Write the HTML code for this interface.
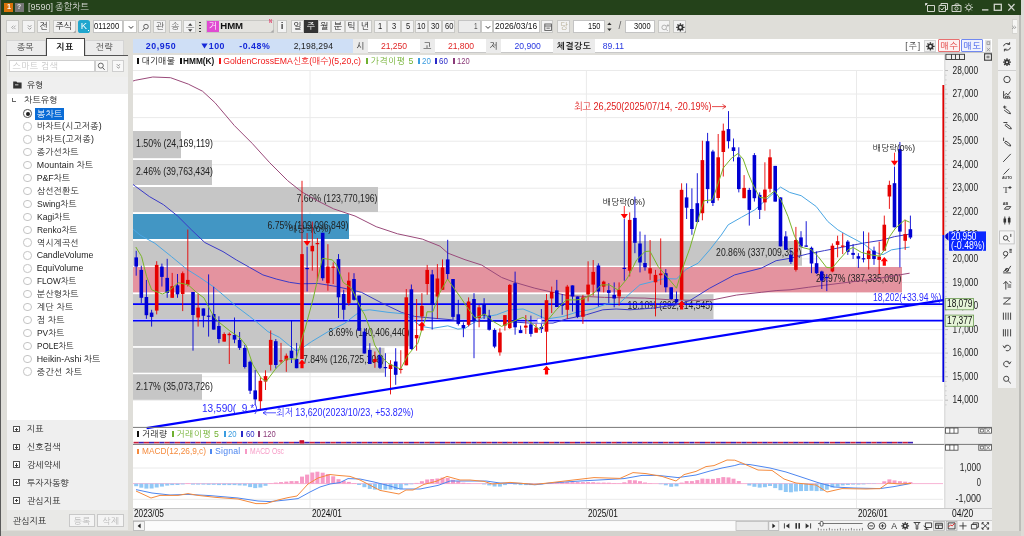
<!DOCTYPE html><html lang="ko"><head><meta charset="utf-8"><title>[9590] 종합차트</title><style>
*{box-sizing:border-box;margin:0;padding:0}
html,body{width:1024px;height:536px;overflow:hidden}
body{position:relative;background:#dfded9;font-family:"Liberation Sans","NanumGothic",sans-serif;font-size:8.6px;color:#222;line-height:1}
.a{position:absolute}
.t{position:absolute;white-space:pre;line-height:12px;height:12px}
#w{position:absolute;left:0;top:0;width:1024px;height:536px;will-change:transform}
.title{left:0;top:0;width:1021.4px;height:14.9px;background:#24421a}
.ledge{left:0;top:0;width:1.3px;height:536px;background:#5a5a5a}
.btn{position:absolute;top:19.5px;height:13.6px;background:#f3f3f3;border:0.7px solid #c9c9c6}
.inp{position:absolute;top:19.5px;height:13.6px;background:#fff;border:0.7px solid #c4c4c4}
.tab{position:absolute;top:39.5px;height:15.5px;background:#ececec;border:0.7px solid #d4d4d4;border-bottom:none}
.info{left:133px;top:39px;width:859px;height:14.4px;background:#fff;border-bottom:0.8px solid #c8c8c8}
.cell{position:absolute;top:39px;height:13.6px;background:#ebebeb}
.rd{position:absolute;left:23.4px;width:8.4px;height:8.4px;border:0.8px solid #c4c4c4;border-radius:50%;background:#fff}
.sec{position:absolute;left:6.5px;width:121px;height:17.9px;background:#efefef}
.sec i{position:absolute;left:6.6px;top:5.4px;width:6.6px;height:6.6px;border:0.8px solid #555;background:#fff}
.sec i:before{content:"";position:absolute;left:0.9px;top:2.1px;width:3.2px;height:0.8px;background:#444}
.sec i:after{content:"";position:absolute;left:2.1px;top:0.9px;width:0.8px;height:3.2px;background:#444}
.ic{position:absolute;overflow:visible}
svg text{font-family:"Liberation Sans","NanumGothic",sans-serif}
</style></head><body><div id="w">
<svg class="a" style="left:0;top:0" width="1024" height="536" viewBox="0 0 1024 536"><rect x="133" y="55" width="859" height="476" fill="#fff"/>
<rect x="945" y="53" width="47" height="478" fill="#efefef"/>
<line x1="133" x2="943" y1="70.5" y2="70.5" stroke="#eaeaea" stroke-width="1"/>
<line x1="133" x2="943" y1="94.0" y2="94.0" stroke="#eaeaea" stroke-width="1"/>
<line x1="133" x2="943" y1="117.6" y2="117.6" stroke="#eaeaea" stroke-width="1"/>
<line x1="133" x2="943" y1="141.2" y2="141.2" stroke="#eaeaea" stroke-width="1"/>
<line x1="133" x2="943" y1="164.7" y2="164.7" stroke="#eaeaea" stroke-width="1"/>
<line x1="133" x2="943" y1="188.2" y2="188.2" stroke="#eaeaea" stroke-width="1"/>
<line x1="133" x2="943" y1="211.8" y2="211.8" stroke="#eaeaea" stroke-width="1"/>
<line x1="133" x2="943" y1="235.3" y2="235.3" stroke="#eaeaea" stroke-width="1"/>
<line x1="133" x2="943" y1="258.9" y2="258.9" stroke="#eaeaea" stroke-width="1"/>
<line x1="133" x2="943" y1="282.5" y2="282.5" stroke="#eaeaea" stroke-width="1"/>
<line x1="133" x2="943" y1="306.0" y2="306.0" stroke="#eaeaea" stroke-width="1"/>
<line x1="133" x2="943" y1="329.6" y2="329.6" stroke="#eaeaea" stroke-width="1"/>
<line x1="133" x2="943" y1="353.1" y2="353.1" stroke="#eaeaea" stroke-width="1"/>
<line x1="133" x2="943" y1="376.7" y2="376.7" stroke="#eaeaea" stroke-width="1"/>
<line x1="133" x2="943" y1="400.2" y2="400.2" stroke="#eaeaea" stroke-width="1"/>
<line x1="310" x2="310" y1="70" y2="508" stroke="#eaeaea" stroke-width="1"/>
<line x1="586.4" x2="586.4" y1="70" y2="508" stroke="#eaeaea" stroke-width="1"/>
<line x1="856.5" x2="856.5" y1="70" y2="508" stroke="#eaeaea" stroke-width="1"/>
<line x1="133" x2="943" y1="468" y2="468" stroke="#eaeaea" stroke-width="1"/>
<line x1="133" x2="943" y1="499.3" y2="499.3" stroke="#eaeaea" stroke-width="1"/>
<rect x="133" y="131" width="48.0" height="27.2" fill="#c6c6c6"/>
<rect x="133" y="160" width="79.0" height="25.0" fill="#c6c6c6"/>
<rect x="133" y="187" width="245.0" height="25.0" fill="#c6c6c6"/>
<rect x="133" y="214" width="216.0" height="25.0" fill="#4296c4"/>
<rect x="133" y="241" width="669.0" height="24.7" fill="#c6c6c6"/>
<rect x="133" y="267" width="769.0" height="25.4" fill="#e4939f"/>
<rect x="133" y="294.2" width="580.5" height="24.8" fill="#c6c6c6"/>
<rect x="133" y="320.5" width="277.0" height="25.6" fill="#c6c6c6"/>
<rect x="133" y="347.8" width="251.5" height="24.9" fill="#c6c6c6"/>
<rect x="133" y="374.2" width="69.0" height="25.6" fill="#c6c6c6"/>
<text x="136.0" y="147.1" font-size="10.4" fill="#222" text-anchor="start" textLength="76.9" lengthAdjust="spacingAndGlyphs" >1.50% (24,169,119)</text>
<text x="136.0" y="175.0" font-size="10.4" fill="#222" text-anchor="start" textLength="76.9" lengthAdjust="spacingAndGlyphs" >2.46% (39,763,434)</text>
<text x="377.5" y="202.0" font-size="10.4" fill="#222" text-anchor="end" textLength="81.1" lengthAdjust="spacingAndGlyphs" >7.66% (123,770,196)</text>
<text x="348.5" y="229.0" font-size="10.4" fill="#222" text-anchor="end" textLength="81.1" lengthAdjust="spacingAndGlyphs" >6.75% (109,096,849)</text>
<text x="801.5" y="255.8" font-size="10.4" fill="#222" text-anchor="end" textLength="85.4" lengthAdjust="spacingAndGlyphs" >20.86% (337,009,352)</text>
<text x="901.5" y="282.2" font-size="10.4" fill="#222" text-anchor="end" textLength="85.4" lengthAdjust="spacingAndGlyphs" >23.97% (387,335,090)</text>
<text x="713.0" y="309.1" font-size="10.4" fill="#222" text-anchor="end" textLength="85.4" lengthAdjust="spacingAndGlyphs" >18.10% (292,414,545)</text>
<text x="409.5" y="335.8" font-size="10.4" fill="#222" text-anchor="end" textLength="81.1" lengthAdjust="spacingAndGlyphs" >8.69% (140,406,440)</text>
<text x="384.0" y="362.8" font-size="10.4" fill="#222" text-anchor="end" textLength="81.1" lengthAdjust="spacingAndGlyphs" >7.84% (126,725,106)</text>
<text x="136.0" y="389.5" font-size="10.4" fill="#222" text-anchor="start" textLength="76.9" lengthAdjust="spacingAndGlyphs" >2.17% (35,073,726)</text>
<line x1="133" x2="943" y1="304.2" y2="304.2" stroke="#0000ff" stroke-width="1.8"/>
<line x1="133" x2="943" y1="320.7" y2="320.7" stroke="#0000ff" stroke-width="1.8"/>
<polyline points="133.0,81.0 135.8,80.2 152.8,77.0 170.5,77.7 188.3,84.1 202.5,91.2 214.9,102.6 234.4,125.6 252.1,143.3 269.8,162.8 287.6,180.6 301.8,191.9 315.9,200.0 333.7,208.9 355.0,216.0 376.2,226.7 397.5,233.8 422.3,239.1 440.0,246.2 447.8,253.1 465.0,259.7 481.6,265.0 501.5,277.4 514.8,282.4 534.8,288.2 553.0,292.4 568.0,295.7 586.2,296.5 604.5,297.4 630.0,297.9 644.9,298.1 669.8,299.8 693.1,300.3 713.0,299.8 736.3,295.1 761.2,292.3 776.1,290.6 790.0,289.8 808.2,287.3 841.4,283.1 874.7,279.0 909.6,273.2" fill="none" stroke="#9a4a7a" stroke-width="1"/>
<polyline points="133.0,184.5 135.8,186.6 149.3,196.5 163.5,204.7 177.6,216.0 191.8,230.2 204.8,242.5 223.0,251.6 236.3,259.9 249.6,267.4 262.9,274.9 276.2,279.0 289.5,282.3 300.0,283.8 318.3,283.5 336.5,286.5 361.4,292.3 381.4,302.8 401.3,312.3 414.6,316.4 431.2,318.0 451.0,319.7 460.0,321.5 476.6,321.4 503.2,321.4 529.8,323.1 553.0,323.1 566.3,319.0 586.2,314.8 602.9,309.8 616.1,309.0 630.0,309.8 653.2,308.1 676.5,304.8 689.8,300.6 709.7,288.2 734.6,274.9 761.2,268.2 776.1,260.7 790.0,258.3 807.9,253.9 824.5,250.6 841.4,247.4 864.7,242.9 881.3,240.3 894.6,236.6 909.6,234.1" fill="none" stroke="#3a3ac8" stroke-width="1"/>
<polyline points="133.0,229.0 140.0,235.0 154.9,243.3 171.5,256.6 186.5,269.0 199.8,277.4 213.1,286.5 223.0,294.8 236.3,306.4 249.6,316.4 256.2,321.6 267.9,331.6 279.5,337.4 289.5,345.7 296.1,350.7 300.0,349.5 311.6,341.6 328.2,331.6 344.8,323.3 353.1,316.7 361.4,310.6 369.7,309.8 388.0,312.3 404.6,313.9 414.6,321.4 421.2,326.4 432.9,328.3 447.8,325.8 457.8,329.1 465.0,328.5 470.0,324.8 483.3,317.3 496.5,314.8 509.8,309.8 523.1,309.0 533.1,313.1 546.4,319.0 563.0,316.5 576.3,312.3 592.9,309.0 606.2,304.0 619.5,303.2 630.0,293.5 639.9,284.8 653.2,281.5 664.9,278.5 676.5,279.0 686.4,269.1 698.1,263.2 709.7,249.9 721.3,235.0 728.2,224.8 741.4,217.3 754.7,209.9 768.0,198.2 780.5,187.1 789.6,192.4 801.2,195.7 816.2,206.5 827.8,221.5 837.8,229.8 845.0,234.0 853.1,238.3 864.7,244.6 874.7,252.4 883.0,254.6 891.3,249.9 901.2,248.3 909.6,247.1" fill="none" stroke="#4aa6e4" stroke-width="1"/>
<line x1="136.2" x2="136.2" y1="250.8" y2="275.7" stroke="#0000d2" stroke-width="0.9"/>
<rect x="134.4" y="257.4" width="3.6" height="9.2" fill="#0000d2"/>
<line x1="141.3" x2="141.3" y1="265.7" y2="303.1" stroke="#0000d2" stroke-width="0.9"/>
<rect x="139.5" y="269.9" width="3.6" height="27.9" fill="#0000d2"/>
<line x1="146.4" x2="146.4" y1="279.9" y2="318.9" stroke="#0000d2" stroke-width="0.9"/>
<rect x="144.6" y="297.0" width="3.6" height="18.2" fill="#0000d2"/>
<line x1="151.6" x2="151.6" y1="309.8" y2="326.6" stroke="#0000d2" stroke-width="0.9"/>
<rect x="149.8" y="312.6" width="3.6" height="4.3" fill="#0000d2"/>
<line x1="156.7" x2="156.7" y1="261.2" y2="314.4" stroke="#e60000" stroke-width="0.9"/>
<rect x="154.9" y="264.9" width="3.6" height="45.7" fill="#e60000"/>
<line x1="161.9" x2="161.9" y1="263.6" y2="286.5" stroke="#0000d2" stroke-width="0.9"/>
<rect x="160.1" y="266.6" width="3.6" height="10.3" fill="#0000d2"/>
<line x1="167.2" x2="167.2" y1="258.8" y2="297.8" stroke="#0000d2" stroke-width="0.9"/>
<rect x="165.4" y="277.9" width="3.6" height="15.2" fill="#0000d2"/>
<line x1="172.2" x2="172.2" y1="272.9" y2="297.8" stroke="#e60000" stroke-width="0.9"/>
<rect x="170.4" y="286.2" width="3.6" height="11.6" fill="#e60000"/>
<line x1="177.5" x2="177.5" y1="274.0" y2="297.8" stroke="#0000d2" stroke-width="0.9"/>
<rect x="175.7" y="285.3" width="3.6" height="9.0" fill="#0000d2"/>
<line x1="182.7" x2="182.7" y1="271.5" y2="311.1" stroke="#e60000" stroke-width="0.9"/>
<rect x="180.9" y="273.2" width="3.6" height="20.8" fill="#e60000"/>
<line x1="187.8" x2="187.8" y1="229.5" y2="286.5" stroke="#e60000" stroke-width="0.9"/>
<rect x="186.0" y="279.9" width="3.6" height="4.9" fill="#e60000"/>
<line x1="193.0" x2="193.0" y1="292.0" y2="350.7" stroke="#0000d2" stroke-width="0.9"/>
<rect x="191.2" y="292.0" width="3.6" height="23.0" fill="#0000d2"/>
<line x1="198.1" x2="198.1" y1="294.0" y2="326.6" stroke="#e60000" stroke-width="0.9"/>
<rect x="196.3" y="307.6" width="3.6" height="9.9" fill="#e60000"/>
<line x1="203.4" x2="203.4" y1="308.4" y2="327.4" stroke="#0000d2" stroke-width="0.9"/>
<rect x="201.6" y="308.4" width="3.6" height="7.4" fill="#0000d2"/>
<line x1="208.6" x2="208.6" y1="274.4" y2="336.6" stroke="#0000d2" stroke-width="0.9"/>
<rect x="206.8" y="315.6" width="3.6" height="1.2" fill="#0000d2"/>
<line x1="213.7" x2="213.7" y1="286.8" y2="329.6" stroke="#0000d2" stroke-width="0.9"/>
<rect x="211.9" y="314.0" width="3.6" height="15.6" fill="#0000d2"/>
<line x1="218.9" x2="218.9" y1="316.3" y2="343.2" stroke="#0000d2" stroke-width="0.9"/>
<rect x="217.1" y="326.0" width="3.6" height="13.0" fill="#0000d2"/>
<line x1="224.2" x2="224.2" y1="332.4" y2="341.6" stroke="#e60000" stroke-width="0.9"/>
<rect x="222.4" y="334.0" width="3.6" height="7.6" fill="#e60000"/>
<line x1="229.3" x2="229.3" y1="332.4" y2="364.0" stroke="#e60000" stroke-width="0.9"/>
<rect x="227.5" y="333.8" width="3.6" height="1.4" fill="#e60000"/>
<line x1="234.5" x2="234.5" y1="317.5" y2="343.2" stroke="#0000d2" stroke-width="0.9"/>
<rect x="232.7" y="335.0" width="3.6" height="4.6" fill="#0000d2"/>
<line x1="239.6" x2="239.6" y1="332.0" y2="349.9" stroke="#0000d2" stroke-width="0.9"/>
<rect x="237.8" y="340.0" width="3.6" height="7.9" fill="#0000d2"/>
<line x1="244.8" x2="244.8" y1="344.9" y2="368.5" stroke="#0000d2" stroke-width="0.9"/>
<rect x="243.0" y="347.9" width="3.6" height="19.1" fill="#0000d2"/>
<line x1="250.1" x2="250.1" y1="360.7" y2="394.0" stroke="#0000d2" stroke-width="0.9"/>
<rect x="248.3" y="361.8" width="3.6" height="28.9" fill="#0000d2"/>
<line x1="255.2" x2="255.2" y1="370.0" y2="404.9" stroke="#0000d2" stroke-width="0.9"/>
<rect x="253.4" y="390.4" width="3.6" height="9.0" fill="#0000d2"/>
<line x1="260.4" x2="260.4" y1="377.4" y2="409.0" stroke="#e60000" stroke-width="0.9"/>
<rect x="258.6" y="380.8" width="3.6" height="20.4" fill="#e60000"/>
<line x1="265.5" x2="265.5" y1="370.3" y2="390.0" stroke="#e60000" stroke-width="0.9"/>
<rect x="263.7" y="376.1" width="3.6" height="5.5" fill="#e60000"/>
<line x1="270.7" x2="270.7" y1="330.4" y2="370.6" stroke="#e60000" stroke-width="0.9"/>
<rect x="268.9" y="339.9" width="3.6" height="24.9" fill="#e60000"/>
<line x1="275.8" x2="275.8" y1="339.0" y2="368.5" stroke="#0000d2" stroke-width="0.9"/>
<rect x="274.0" y="341.2" width="3.6" height="23.8" fill="#0000d2"/>
<line x1="281.0" x2="281.0" y1="342.9" y2="363.5" stroke="#e60000" stroke-width="0.9"/>
<rect x="279.2" y="360.3" width="3.6" height="1.2" fill="#e60000"/>
<line x1="286.3" x2="286.3" y1="353.5" y2="371.8" stroke="#e60000" stroke-width="0.9"/>
<rect x="284.5" y="355.7" width="3.6" height="4.6" fill="#e60000"/>
<line x1="291.5" x2="291.5" y1="320.5" y2="363.0" stroke="#0000d2" stroke-width="0.9"/>
<rect x="289.7" y="350.7" width="3.6" height="7.5" fill="#0000d2"/>
<line x1="296.6" x2="296.6" y1="342.9" y2="368.2" stroke="#0000d2" stroke-width="0.9"/>
<rect x="294.8" y="359.0" width="3.6" height="9.2" fill="#0000d2"/>
<line x1="302.0" x2="302.0" y1="180.8" y2="359.0" stroke="#e60000" stroke-width="0.9"/>
<rect x="300.2" y="254.1" width="3.6" height="104.9" fill="#e60000"/>
<line x1="307.1" x2="307.1" y1="246.6" y2="291.5" stroke="#0000d2" stroke-width="0.9"/>
<rect x="305.3" y="268.0" width="3.6" height="1.2" fill="#0000d2"/>
<line x1="312.3" x2="312.3" y1="221.5" y2="270.7" stroke="#e60000" stroke-width="0.9"/>
<rect x="310.5" y="245.8" width="3.6" height="5.5" fill="#e60000"/>
<line x1="317.4" x2="317.4" y1="238.0" y2="280.7" stroke="#e60000" stroke-width="0.9"/>
<rect x="315.6" y="243.0" width="3.6" height="1.2" fill="#e60000"/>
<line x1="322.7" x2="322.7" y1="232.8" y2="280.7" stroke="#0000d2" stroke-width="0.9"/>
<rect x="320.9" y="232.8" width="3.6" height="45.4" fill="#0000d2"/>
<line x1="327.9" x2="327.9" y1="244.2" y2="290.7" stroke="#e60000" stroke-width="0.9"/>
<rect x="326.1" y="266.6" width="3.6" height="16.6" fill="#e60000"/>
<line x1="333.2" x2="333.2" y1="262.4" y2="284.0" stroke="#e60000" stroke-width="0.9"/>
<rect x="331.4" y="266.6" width="3.6" height="1.2" fill="#e60000"/>
<line x1="338.5" x2="338.5" y1="254.1" y2="318.0" stroke="#0000d2" stroke-width="0.9"/>
<rect x="336.7" y="259.1" width="3.6" height="38.2" fill="#0000d2"/>
<line x1="343.7" x2="343.7" y1="289.8" y2="319.7" stroke="#0000d2" stroke-width="0.9"/>
<rect x="341.9" y="294.0" width="3.6" height="15.8" fill="#0000d2"/>
<line x1="348.8" x2="348.8" y1="272.4" y2="305.6" stroke="#e60000" stroke-width="0.9"/>
<rect x="347.0" y="280.7" width="3.6" height="22.4" fill="#e60000"/>
<line x1="354.0" x2="354.0" y1="273.2" y2="300.6" stroke="#0000d2" stroke-width="0.9"/>
<rect x="352.2" y="279.0" width="3.6" height="20.8" fill="#0000d2"/>
<line x1="359.1" x2="359.1" y1="295.6" y2="330.8" stroke="#0000d2" stroke-width="0.9"/>
<rect x="357.3" y="295.6" width="3.6" height="35.2" fill="#0000d2"/>
<line x1="364.4" x2="364.4" y1="328.3" y2="353.5" stroke="#0000d2" stroke-width="0.9"/>
<rect x="362.6" y="331.6" width="3.6" height="21.9" fill="#0000d2"/>
<line x1="369.8" x2="369.8" y1="343.2" y2="364.0" stroke="#0000d2" stroke-width="0.9"/>
<rect x="368.0" y="349.9" width="3.6" height="14.1" fill="#0000d2"/>
<line x1="374.9" x2="374.9" y1="351.5" y2="367.8" stroke="#e60000" stroke-width="0.9"/>
<rect x="373.1" y="359.0" width="3.6" height="3.0" fill="#e60000"/>
<line x1="380.0" x2="380.0" y1="347.4" y2="369.0" stroke="#0000d2" stroke-width="0.9"/>
<rect x="378.2" y="354.9" width="3.6" height="12.9" fill="#0000d2"/>
<line x1="385.4" x2="385.4" y1="353.2" y2="376.8" stroke="#0000d2" stroke-width="0.9"/>
<rect x="383.6" y="367.0" width="3.6" height="1.2" fill="#0000d2"/>
<line x1="390.5" x2="390.5" y1="360.2" y2="394.4" stroke="#e60000" stroke-width="0.9"/>
<rect x="388.7" y="364.5" width="3.6" height="4.5" fill="#e60000"/>
<line x1="395.7" x2="395.7" y1="348.2" y2="384.8" stroke="#0000d2" stroke-width="0.9"/>
<rect x="393.9" y="361.5" width="3.6" height="13.3" fill="#0000d2"/>
<line x1="400.8" x2="400.8" y1="350.2" y2="373.5" stroke="#e60000" stroke-width="0.9"/>
<rect x="399.0" y="368.8" width="3.6" height="1.2" fill="#e60000"/>
<line x1="406.3" x2="406.3" y1="289.0" y2="365.3" stroke="#e60000" stroke-width="0.9"/>
<rect x="404.5" y="297.3" width="3.6" height="68.0" fill="#e60000"/>
<line x1="411.4" x2="411.4" y1="284.5" y2="349.9" stroke="#0000d2" stroke-width="0.9"/>
<rect x="409.6" y="289.3" width="3.6" height="59.7" fill="#0000d2"/>
<line x1="416.6" x2="416.6" y1="299.0" y2="350.7" stroke="#e60000" stroke-width="0.9"/>
<rect x="414.8" y="335.0" width="3.6" height="3.3" fill="#e60000"/>
<line x1="421.9" x2="421.9" y1="293.2" y2="321.0" stroke="#e60000" stroke-width="0.9"/>
<rect x="420.1" y="305.9" width="3.6" height="10.5" fill="#e60000"/>
<line x1="427.2" x2="427.2" y1="264.9" y2="294.8" stroke="#e60000" stroke-width="0.9"/>
<rect x="425.4" y="269.9" width="3.6" height="14.1" fill="#e60000"/>
<line x1="432.2" x2="432.2" y1="269.9" y2="329.6" stroke="#0000d2" stroke-width="0.9"/>
<rect x="430.4" y="274.4" width="3.6" height="30.4" fill="#0000d2"/>
<line x1="437.4" x2="437.4" y1="264.1" y2="318.9" stroke="#e60000" stroke-width="0.9"/>
<rect x="435.6" y="278.5" width="3.6" height="18.0" fill="#e60000"/>
<line x1="442.5" x2="442.5" y1="259.4" y2="289.8" stroke="#e60000" stroke-width="0.9"/>
<rect x="440.7" y="267.4" width="3.6" height="22.4" fill="#e60000"/>
<line x1="447.7" x2="447.7" y1="239.8" y2="279.9" stroke="#0000d2" stroke-width="0.9"/>
<rect x="445.9" y="259.4" width="3.6" height="14.6" fill="#0000d2"/>
<line x1="453.0" x2="453.0" y1="279.0" y2="319.7" stroke="#0000d2" stroke-width="0.9"/>
<rect x="451.2" y="279.0" width="3.6" height="37.9" fill="#0000d2"/>
<line x1="458.3" x2="458.3" y1="299.8" y2="325.5" stroke="#0000d2" stroke-width="0.9"/>
<rect x="456.5" y="314.3" width="3.6" height="9.6" fill="#0000d2"/>
<line x1="463.4" x2="463.4" y1="322.3" y2="337.2" stroke="#0000d2" stroke-width="0.9"/>
<rect x="461.6" y="325.0" width="3.6" height="3.0" fill="#0000d2"/>
<line x1="468.6" x2="468.6" y1="297.4" y2="326.4" stroke="#e60000" stroke-width="0.9"/>
<rect x="466.8" y="301.5" width="3.6" height="23.3" fill="#e60000"/>
<line x1="474.0" x2="474.0" y1="293.2" y2="358.2" stroke="#0000d2" stroke-width="0.9"/>
<rect x="472.2" y="299.0" width="3.6" height="21.6" fill="#0000d2"/>
<line x1="479.1" x2="479.1" y1="304.8" y2="327.3" stroke="#e60000" stroke-width="0.9"/>
<rect x="477.3" y="307.3" width="3.6" height="10.8" fill="#e60000"/>
<line x1="484.1" x2="484.1" y1="298.2" y2="319.0" stroke="#0000d2" stroke-width="0.9"/>
<rect x="482.3" y="304.0" width="3.6" height="11.6" fill="#0000d2"/>
<line x1="489.2" x2="489.2" y1="309.8" y2="330.6" stroke="#0000d2" stroke-width="0.9"/>
<rect x="487.4" y="315.6" width="3.6" height="14.2" fill="#0000d2"/>
<line x1="494.6" x2="494.6" y1="328.3" y2="348.2" stroke="#0000d2" stroke-width="0.9"/>
<rect x="492.8" y="330.0" width="3.6" height="16.6" fill="#0000d2"/>
<line x1="499.9" x2="499.9" y1="328.3" y2="355.7" stroke="#e60000" stroke-width="0.9"/>
<rect x="498.1" y="332.5" width="3.6" height="19.9" fill="#e60000"/>
<line x1="504.9" x2="504.9" y1="315.1" y2="330.6" stroke="#e60000" stroke-width="0.9"/>
<rect x="503.1" y="315.1" width="3.6" height="10.5" fill="#e60000"/>
<line x1="509.8" x2="509.8" y1="284.1" y2="329.0" stroke="#e60000" stroke-width="0.9"/>
<rect x="508.0" y="284.9" width="3.6" height="43.2" fill="#e60000"/>
<line x1="515.1" x2="515.1" y1="271.6" y2="334.7" stroke="#0000d2" stroke-width="0.9"/>
<rect x="513.3" y="283.2" width="3.6" height="44.1" fill="#0000d2"/>
<line x1="520.6" x2="520.6" y1="325.6" y2="333.1" stroke="#0000d2" stroke-width="0.9"/>
<rect x="518.8" y="330.1" width="3.6" height="3.0" fill="#0000d2"/>
<line x1="525.8" x2="525.8" y1="315.1" y2="333.9" stroke="#e60000" stroke-width="0.9"/>
<rect x="524.0" y="325.6" width="3.6" height="2.0" fill="#e60000"/>
<line x1="530.9" x2="530.9" y1="315.6" y2="336.7" stroke="#0000d2" stroke-width="0.9"/>
<rect x="529.1" y="324.4" width="3.6" height="9.5" fill="#0000d2"/>
<line x1="536.1" x2="536.1" y1="323.9" y2="332.7" stroke="#e60000" stroke-width="0.9"/>
<rect x="534.3" y="327.6" width="3.6" height="5.1" fill="#e60000"/>
<line x1="541.4" x2="541.4" y1="309.0" y2="333.0" stroke="#0000d2" stroke-width="0.9"/>
<rect x="539.6" y="327.0" width="3.6" height="2.0" fill="#0000d2"/>
<line x1="546.5" x2="546.5" y1="294.0" y2="364.0" stroke="#e60000" stroke-width="0.9"/>
<rect x="544.7" y="300.2" width="3.6" height="31.5" fill="#e60000"/>
<line x1="551.7" x2="551.7" y1="286.6" y2="313.1" stroke="#e60000" stroke-width="0.9"/>
<rect x="549.9" y="291.9" width="3.6" height="6.6" fill="#e60000"/>
<line x1="556.8" x2="556.8" y1="279.9" y2="307.0" stroke="#0000d2" stroke-width="0.9"/>
<rect x="555.0" y="290.4" width="3.6" height="16.6" fill="#0000d2"/>
<line x1="562.2" x2="562.2" y1="294.0" y2="314.8" stroke="#0000d2" stroke-width="0.9"/>
<rect x="560.4" y="304.5" width="3.6" height="1.2" fill="#0000d2"/>
<line x1="567.3" x2="567.3" y1="284.9" y2="319.0" stroke="#e60000" stroke-width="0.9"/>
<rect x="565.5" y="286.6" width="3.6" height="23.2" fill="#e60000"/>
<line x1="572.5" x2="572.5" y1="285.4" y2="311.5" stroke="#0000d2" stroke-width="0.9"/>
<rect x="570.7" y="285.4" width="3.6" height="11.1" fill="#0000d2"/>
<line x1="577.6" x2="577.6" y1="296.5" y2="318.1" stroke="#0000d2" stroke-width="0.9"/>
<rect x="575.8" y="296.5" width="3.6" height="20.3" fill="#0000d2"/>
<line x1="582.9" x2="582.9" y1="294.9" y2="323.9" stroke="#e60000" stroke-width="0.9"/>
<rect x="581.1" y="297.4" width="3.6" height="19.4" fill="#e60000"/>
<line x1="588.1" x2="588.1" y1="261.3" y2="301.5" stroke="#e60000" stroke-width="0.9"/>
<rect x="586.3" y="284.6" width="3.6" height="9.8" fill="#e60000"/>
<line x1="593.2" x2="593.2" y1="260.0" y2="295.7" stroke="#e60000" stroke-width="0.9"/>
<rect x="591.4" y="271.9" width="3.6" height="12.7" fill="#e60000"/>
<line x1="598.4" x2="598.4" y1="263.3" y2="306.5" stroke="#0000d2" stroke-width="0.9"/>
<rect x="596.6" y="265.5" width="3.6" height="26.0" fill="#0000d2"/>
<line x1="603.7" x2="603.7" y1="280.7" y2="292.4" stroke="#e60000" stroke-width="0.9"/>
<rect x="601.9" y="281.6" width="3.6" height="5.0" fill="#e60000"/>
<line x1="608.8" x2="608.8" y1="283.2" y2="303.2" stroke="#0000d2" stroke-width="0.9"/>
<rect x="607.0" y="290.2" width="3.6" height="2.7" fill="#0000d2"/>
<line x1="614.2" x2="614.2" y1="282.4" y2="307.3" stroke="#0000d2" stroke-width="0.9"/>
<rect x="612.4" y="294.9" width="3.6" height="3.6" fill="#0000d2"/>
<line x1="619.1" x2="619.1" y1="282.4" y2="305.7" stroke="#e60000" stroke-width="0.9"/>
<rect x="617.3" y="289.9" width="3.6" height="6.6" fill="#e60000"/>
<line x1="624.3" x2="624.3" y1="219.0" y2="280.7" stroke="#0000d2" stroke-width="0.9"/>
<rect x="622.5" y="267.8" width="3.6" height="1.2" fill="#0000d2"/>
<line x1="629.7" x2="629.7" y1="212.4" y2="276.5" stroke="#e60000" stroke-width="0.9"/>
<rect x="627.9" y="219.9" width="3.6" height="50.8" fill="#e60000"/>
<line x1="634.9" x2="634.9" y1="196.6" y2="253.2" stroke="#0000d2" stroke-width="0.9"/>
<rect x="633.1" y="217.9" width="3.6" height="24.9" fill="#0000d2"/>
<line x1="640.0" x2="640.0" y1="231.5" y2="272.4" stroke="#0000d2" stroke-width="0.9"/>
<rect x="638.2" y="243.5" width="3.6" height="19.0" fill="#0000d2"/>
<line x1="645.0" x2="645.0" y1="234.8" y2="270.7" stroke="#0000d2" stroke-width="0.9"/>
<rect x="643.2" y="263.0" width="3.6" height="4.3" fill="#0000d2"/>
<line x1="650.1" x2="650.1" y1="240.0" y2="279.9" stroke="#e60000" stroke-width="0.9"/>
<rect x="648.3" y="268.2" width="3.6" height="5.3" fill="#e60000"/>
<line x1="655.5" x2="655.5" y1="269.9" y2="316.4" stroke="#e60000" stroke-width="0.9"/>
<rect x="653.7" y="274.9" width="3.6" height="7.4" fill="#e60000"/>
<line x1="660.7" x2="660.7" y1="238.4" y2="284.8" stroke="#e60000" stroke-width="0.9"/>
<rect x="658.9" y="273.5" width="3.6" height="1.7" fill="#e60000"/>
<line x1="665.8" x2="665.8" y1="269.1" y2="292.3" stroke="#0000d2" stroke-width="0.9"/>
<rect x="664.0" y="273.2" width="3.6" height="14.1" fill="#0000d2"/>
<line x1="671.2" x2="671.2" y1="287.3" y2="299.8" stroke="#0000d2" stroke-width="0.9"/>
<rect x="669.4" y="287.3" width="3.6" height="11.7" fill="#0000d2"/>
<line x1="676.5" x2="676.5" y1="291.5" y2="303.1" stroke="#0000d2" stroke-width="0.9"/>
<rect x="674.7" y="299.0" width="3.6" height="3.3" fill="#0000d2"/>
<line x1="681.6" x2="681.6" y1="183.3" y2="299.8" stroke="#e60000" stroke-width="0.9"/>
<rect x="679.8" y="189.8" width="3.6" height="110.0" fill="#e60000"/>
<line x1="686.6" x2="686.6" y1="183.3" y2="219.0" stroke="#0000d2" stroke-width="0.9"/>
<rect x="684.8" y="197.4" width="3.6" height="10.3" fill="#0000d2"/>
<line x1="691.9" x2="691.9" y1="188.3" y2="234.8" stroke="#0000d2" stroke-width="0.9"/>
<rect x="690.1" y="209.0" width="3.6" height="20.0" fill="#0000d2"/>
<line x1="697.3" x2="697.3" y1="173.2" y2="222.3" stroke="#0000d2" stroke-width="0.9"/>
<rect x="695.5" y="203.2" width="3.6" height="18.8" fill="#0000d2"/>
<line x1="702.4" x2="702.4" y1="140.7" y2="220.3" stroke="#e60000" stroke-width="0.9"/>
<rect x="700.6" y="160.1" width="3.6" height="53.1" fill="#e60000"/>
<line x1="707.6" x2="707.6" y1="132.9" y2="203.2" stroke="#0000d2" stroke-width="0.9"/>
<rect x="705.8" y="141.2" width="3.6" height="47.9" fill="#0000d2"/>
<line x1="712.9" x2="712.9" y1="149.8" y2="206.0" stroke="#0000d2" stroke-width="0.9"/>
<rect x="711.1" y="151.5" width="3.6" height="51.5" fill="#0000d2"/>
<line x1="718.2" x2="718.2" y1="134.0" y2="200.5" stroke="#e60000" stroke-width="0.9"/>
<rect x="716.4" y="157.3" width="3.6" height="40.7" fill="#e60000"/>
<line x1="723.3" x2="723.3" y1="123.6" y2="176.5" stroke="#e60000" stroke-width="0.9"/>
<rect x="721.5" y="130.7" width="3.6" height="21.3" fill="#e60000"/>
<line x1="728.5" x2="728.5" y1="111.1" y2="148.5" stroke="#0000d2" stroke-width="0.9"/>
<rect x="726.7" y="129.1" width="3.6" height="12.1" fill="#0000d2"/>
<line x1="733.5" x2="733.5" y1="138.5" y2="161.4" stroke="#0000d2" stroke-width="0.9"/>
<rect x="731.7" y="147.3" width="3.6" height="3.7" fill="#0000d2"/>
<line x1="738.8" x2="738.8" y1="147.3" y2="192.4" stroke="#0000d2" stroke-width="0.9"/>
<rect x="737.0" y="157.3" width="3.6" height="31.8" fill="#0000d2"/>
<line x1="744.1" x2="744.1" y1="175.1" y2="198.2" stroke="#e60000" stroke-width="0.9"/>
<rect x="742.3" y="187.9" width="3.6" height="10.3" fill="#e60000"/>
<line x1="749.3" x2="749.3" y1="187.9" y2="225.6" stroke="#0000d2" stroke-width="0.9"/>
<rect x="747.5" y="189.9" width="3.6" height="20.0" fill="#0000d2"/>
<line x1="754.4" x2="754.4" y1="153.1" y2="201.6" stroke="#0000d2" stroke-width="0.9"/>
<rect x="752.6" y="155.1" width="3.6" height="43.1" fill="#0000d2"/>
<line x1="759.7" x2="759.7" y1="192.4" y2="219.0" stroke="#0000d2" stroke-width="0.9"/>
<rect x="757.9" y="194.9" width="3.6" height="15.0" fill="#0000d2"/>
<line x1="764.9" x2="764.9" y1="162.3" y2="210.7" stroke="#e60000" stroke-width="0.9"/>
<rect x="763.1" y="189.6" width="3.6" height="12.8" fill="#e60000"/>
<line x1="770.0" x2="770.0" y1="149.3" y2="192.4" stroke="#e60000" stroke-width="0.9"/>
<rect x="768.2" y="157.3" width="3.6" height="31.5" fill="#e60000"/>
<line x1="775.2" x2="775.2" y1="165.9" y2="201.6" stroke="#0000d2" stroke-width="0.9"/>
<rect x="773.4" y="165.9" width="3.6" height="35.7" fill="#0000d2"/>
<line x1="780.5" x2="780.5" y1="197.4" y2="246.4" stroke="#0000d2" stroke-width="0.9"/>
<rect x="778.7" y="197.4" width="3.6" height="49.0" fill="#0000d2"/>
<line x1="785.8" x2="785.8" y1="231.2" y2="249.8" stroke="#0000d2" stroke-width="0.9"/>
<rect x="784.0" y="236.4" width="3.6" height="13.4" fill="#0000d2"/>
<line x1="790.9" x2="790.9" y1="249.9" y2="264.0" stroke="#0000d2" stroke-width="0.9"/>
<rect x="789.1" y="254.8" width="3.6" height="7.1" fill="#0000d2"/>
<line x1="795.9" x2="795.9" y1="226.9" y2="271.5" stroke="#e60000" stroke-width="0.9"/>
<rect x="794.1" y="240.0" width="3.6" height="29.9" fill="#e60000"/>
<line x1="801.0" x2="801.0" y1="231.2" y2="247.3" stroke="#0000d2" stroke-width="0.9"/>
<rect x="799.2" y="237.4" width="3.6" height="9.1" fill="#0000d2"/>
<line x1="806.2" x2="806.2" y1="221.2" y2="247.0" stroke="#0000d2" stroke-width="0.9"/>
<rect x="804.4" y="245.5" width="3.6" height="1.2" fill="#0000d2"/>
<line x1="811.5" x2="811.5" y1="246.6" y2="273.2" stroke="#0000d2" stroke-width="0.9"/>
<rect x="809.7" y="247.8" width="3.6" height="15.7" fill="#0000d2"/>
<line x1="816.6" x2="816.6" y1="251.5" y2="274.0" stroke="#0000d2" stroke-width="0.9"/>
<rect x="814.8" y="263.2" width="3.6" height="10.0" fill="#0000d2"/>
<line x1="821.8" x2="821.8" y1="270.7" y2="289.0" stroke="#0000d2" stroke-width="0.9"/>
<rect x="820.0" y="271.5" width="3.6" height="9.1" fill="#0000d2"/>
<line x1="826.8" x2="826.8" y1="274.0" y2="291.1" stroke="#0000d2" stroke-width="0.9"/>
<rect x="825.0" y="277.0" width="3.6" height="1.2" fill="#0000d2"/>
<line x1="832.4" x2="832.4" y1="243.4" y2="272.3" stroke="#e60000" stroke-width="0.9"/>
<rect x="830.6" y="245.7" width="3.6" height="25.8" fill="#e60000"/>
<line x1="837.6" x2="837.6" y1="235.7" y2="257.4" stroke="#e60000" stroke-width="0.9"/>
<rect x="835.8" y="241.2" width="3.6" height="3.7" fill="#e60000"/>
<line x1="842.7" x2="842.7" y1="233.2" y2="254.1" stroke="#e60000" stroke-width="0.9"/>
<rect x="840.9" y="245.5" width="3.6" height="1.3" fill="#e60000"/>
<line x1="847.8" x2="847.8" y1="240.0" y2="254.9" stroke="#0000d2" stroke-width="0.9"/>
<rect x="846.0" y="241.6" width="3.6" height="10.3" fill="#0000d2"/>
<line x1="853.1" x2="853.1" y1="244.1" y2="259.0" stroke="#0000d2" stroke-width="0.9"/>
<rect x="851.3" y="252.9" width="3.6" height="2.0" fill="#0000d2"/>
<line x1="858.4" x2="858.4" y1="253.2" y2="267.9" stroke="#0000d2" stroke-width="0.9"/>
<rect x="856.6" y="256.2" width="3.6" height="2.5" fill="#0000d2"/>
<line x1="863.5" x2="863.5" y1="231.3" y2="262.4" stroke="#0000d2" stroke-width="0.9"/>
<rect x="861.7" y="258.2" width="3.6" height="1.2" fill="#0000d2"/>
<line x1="868.7" x2="868.7" y1="232.5" y2="269.5" stroke="#e60000" stroke-width="0.9"/>
<rect x="866.9" y="250.7" width="3.6" height="8.3" fill="#e60000"/>
<line x1="874.0" x2="874.0" y1="246.6" y2="264.9" stroke="#0000d2" stroke-width="0.9"/>
<rect x="872.2" y="250.7" width="3.6" height="8.3" fill="#0000d2"/>
<line x1="879.2" x2="879.2" y1="241.6" y2="274.0" stroke="#e60000" stroke-width="0.9"/>
<rect x="877.4" y="256.6" width="3.6" height="3.3" fill="#e60000"/>
<line x1="884.3" x2="884.3" y1="215.6" y2="250.7" stroke="#e60000" stroke-width="0.9"/>
<rect x="882.5" y="224.7" width="3.6" height="26.0" fill="#e60000"/>
<line x1="889.4" x2="889.4" y1="180.7" y2="208.9" stroke="#e60000" stroke-width="0.9"/>
<rect x="887.6" y="184.9" width="3.6" height="11.6" fill="#e60000"/>
<line x1="894.5" x2="894.5" y1="166.6" y2="227.3" stroke="#0000d2" stroke-width="0.9"/>
<rect x="892.7" y="183.2" width="3.6" height="44.1" fill="#0000d2"/>
<line x1="899.9" x2="899.9" y1="142.0" y2="267.4" stroke="#0000d2" stroke-width="0.9"/>
<rect x="898.1" y="149.1" width="3.6" height="82.5" fill="#0000d2"/>
<line x1="905.2" x2="905.2" y1="219.7" y2="249.9" stroke="#e60000" stroke-width="0.9"/>
<rect x="903.4" y="234.1" width="3.6" height="6.7" fill="#e60000"/>
<line x1="910.4" x2="910.4" y1="215.6" y2="239.1" stroke="#0000d2" stroke-width="0.9"/>
<rect x="908.6" y="229.2" width="3.6" height="8.3" fill="#0000d2"/>
<polyline points="135.8,247.0 141.6,256.6 146.6,276.5 151.6,289.8 162.4,294.0 168.2,291.5 178.2,282.7 188.1,284.8 196.4,292.3 203.9,297.8 209.7,309.0 214.7,318.1 219.7,322.7 229.7,330.8 239.6,337.4 246.3,345.7 252.9,364.8 261.2,378.1 266.2,381.4 276.2,368.1 286.1,359.0 296.1,359.0 298.3,351.5 302.5,336.6 305.0,329.0 313.3,298.1 322.4,258.3 332.4,259.9 336.5,264.9 343.2,282.4 351.5,288.2 359.8,306.4 364.8,315.0 369.8,328.3 374.7,344.9 381.4,356.5 388.0,363.2 394.7,366.5 400.5,369.0 408.0,354.9 417.9,343.2 422.1,328.3 426.2,316.7 427.0,311.8 432.9,311.8 439.5,293.2 447.5,279.0 454.5,289.0 461.1,298.1 466.6,306.5 475.0,318.1 484.9,314.0 493.2,321.4 501.5,326.4 513.2,321.4 523.1,317.3 531.4,323.1 539.7,329.8 548.0,319.8 556.3,309.8 566.3,299.9 576.3,299.9 582.9,299.0 592.9,294.0 601.2,284.9 609.5,284.9 617.8,289.9 626.1,279.9 628.3,276.5 636.6,259.9 644.9,251.6 649.9,251.1 658.2,266.6 668.2,278.2 676.5,288.2 681.5,271.5 689.8,248.3 693.3,236.4 699.9,213.2 704.1,200.7 712.4,199.9 716.5,188.3 723.2,168.1 731.5,158.1 738.1,153.5 743.1,159.0 748.1,173.1 753.1,185.0 759.7,197.4 765.5,198.2 774.7,190.8 781.3,200.7 788.0,216.5 794.6,236.4 801.2,247.2 811.2,249.7 818.2,256.6 826.5,267.4 832.3,267.9 839.8,259.0 848.1,249.9 853.1,247.4 861.4,252.4 871.3,254.9 879.7,256.2 884.6,249.9 889.6,236.6 895.6,228.0 904.7,220.1 909.7,222.2" fill="none" stroke="#78b428" stroke-width="1"/>
<path d="M302,359.5 l3.6,4.2 h-2 v4.6 h-3.2 v-4.6 h-2 z" fill="#ff0000"/>
<path d="M421.9,321.6 l3.6,4.2 h-2 v4.6 h-3.2 v-4.6 h-2 z" fill="#ff0000"/>
<path d="M546.5,365.7 l3.6,4.2 h-2 v4.6 h-3.2 v-4.6 h-2 z" fill="#ff0000"/>
<path d="M681.6,300.6 l3.6,4.2 h-2 v4.6 h-3.2 v-4.6 h-2 z" fill="#ff0000"/>
<path d="M884.3,257 l3.6,4.2 h-2 v4.6 h-3.2 v-4.6 h-2 z" fill="#ff0000"/>
<path d="M307.1,246 l-3.6,-5 h7.2 z" fill="#ff0000"/><line x1="307.1" x2="307.1" y1="233" y2="242" stroke="#ff0000" stroke-width="0.8"/>
<path d="M624.3,219 l-3.6,-5 h7.2 z" fill="#ff0000"/><line x1="624.3" x2="624.3" y1="206" y2="215" stroke="#ff0000" stroke-width="0.8"/>
<path d="M894.5,165.7 l-3.6,-5 h7.2 z" fill="#ff0000"/><line x1="894.5" x2="894.5" y1="152.7" y2="161.7" stroke="#ff0000" stroke-width="0.8"/>
<line x1="146.6" y1="428.1" x2="943" y2="300.1" stroke="#0000ff" stroke-width="2.2"/>
<rect x="537.2" y="318.6" width="4.6" height="4.6" fill="#fff" stroke="#8888ff" stroke-width="0.6"/>
<rect x="942.4" y="85" width="2.2" height="150" fill="#e00000"/>
<rect x="942.4" y="235" width="2.2" height="147" fill="#0000e0"/>
<path d="M712,106.6 h14 m-3.5,-2.2 l3.5,2.2 l-3.5,2.2" stroke="#e02020" stroke-width="0.8" fill="none"/>
<path d="M276,412.8 h-13 m3.5,-2.2 l-3.5,2.2 l3.5,2.2" stroke="#2a2aff" stroke-width="0.8" fill="none"/>
<line x1="945" x2="948" y1="70.5" y2="70.5" stroke="#bbb" stroke-width="1"/>
<line x1="945" x2="948" y1="94.0" y2="94.0" stroke="#bbb" stroke-width="1"/>
<line x1="945" x2="948" y1="117.6" y2="117.6" stroke="#bbb" stroke-width="1"/>
<line x1="945" x2="948" y1="141.2" y2="141.2" stroke="#bbb" stroke-width="1"/>
<line x1="945" x2="948" y1="164.7" y2="164.7" stroke="#bbb" stroke-width="1"/>
<line x1="945" x2="948" y1="188.2" y2="188.2" stroke="#bbb" stroke-width="1"/>
<line x1="945" x2="948" y1="211.8" y2="211.8" stroke="#bbb" stroke-width="1"/>
<line x1="945" x2="948" y1="235.3" y2="235.3" stroke="#bbb" stroke-width="1"/>
<line x1="945" x2="948" y1="258.9" y2="258.9" stroke="#bbb" stroke-width="1"/>
<line x1="945" x2="948" y1="282.5" y2="282.5" stroke="#bbb" stroke-width="1"/>
<line x1="945" x2="948" y1="306.0" y2="306.0" stroke="#bbb" stroke-width="1"/>
<line x1="945" x2="948" y1="329.6" y2="329.6" stroke="#bbb" stroke-width="1"/>
<line x1="945" x2="948" y1="353.1" y2="353.1" stroke="#bbb" stroke-width="1"/>
<line x1="945" x2="948" y1="376.7" y2="376.7" stroke="#bbb" stroke-width="1"/>
<line x1="945" x2="948" y1="400.2" y2="400.2" stroke="#bbb" stroke-width="1"/>
<line x1="945" x2="946.6" y1="75.2" y2="75.2" stroke="#c4c4c4" stroke-width="0.8"/>
<line x1="945" x2="946.6" y1="79.9" y2="79.9" stroke="#c4c4c4" stroke-width="0.8"/>
<line x1="945" x2="946.6" y1="84.6" y2="84.6" stroke="#c4c4c4" stroke-width="0.8"/>
<line x1="945" x2="946.6" y1="89.3" y2="89.3" stroke="#c4c4c4" stroke-width="0.8"/>
<line x1="945" x2="946.6" y1="98.8" y2="98.8" stroke="#c4c4c4" stroke-width="0.8"/>
<line x1="945" x2="946.6" y1="103.5" y2="103.5" stroke="#c4c4c4" stroke-width="0.8"/>
<line x1="945" x2="946.6" y1="108.2" y2="108.2" stroke="#c4c4c4" stroke-width="0.8"/>
<line x1="945" x2="946.6" y1="112.9" y2="112.9" stroke="#c4c4c4" stroke-width="0.8"/>
<line x1="945" x2="946.6" y1="122.3" y2="122.3" stroke="#c4c4c4" stroke-width="0.8"/>
<line x1="945" x2="946.6" y1="127.0" y2="127.0" stroke="#c4c4c4" stroke-width="0.8"/>
<line x1="945" x2="946.6" y1="131.7" y2="131.7" stroke="#c4c4c4" stroke-width="0.8"/>
<line x1="945" x2="946.6" y1="136.4" y2="136.4" stroke="#c4c4c4" stroke-width="0.8"/>
<line x1="945" x2="946.6" y1="145.9" y2="145.9" stroke="#c4c4c4" stroke-width="0.8"/>
<line x1="945" x2="946.6" y1="150.6" y2="150.6" stroke="#c4c4c4" stroke-width="0.8"/>
<line x1="945" x2="946.6" y1="155.3" y2="155.3" stroke="#c4c4c4" stroke-width="0.8"/>
<line x1="945" x2="946.6" y1="160.0" y2="160.0" stroke="#c4c4c4" stroke-width="0.8"/>
<line x1="945" x2="946.6" y1="169.4" y2="169.4" stroke="#c4c4c4" stroke-width="0.8"/>
<line x1="945" x2="946.6" y1="174.1" y2="174.1" stroke="#c4c4c4" stroke-width="0.8"/>
<line x1="945" x2="946.6" y1="178.8" y2="178.8" stroke="#c4c4c4" stroke-width="0.8"/>
<line x1="945" x2="946.6" y1="183.5" y2="183.5" stroke="#c4c4c4" stroke-width="0.8"/>
<line x1="945" x2="946.6" y1="193.0" y2="193.0" stroke="#c4c4c4" stroke-width="0.8"/>
<line x1="945" x2="946.6" y1="197.7" y2="197.7" stroke="#c4c4c4" stroke-width="0.8"/>
<line x1="945" x2="946.6" y1="202.4" y2="202.4" stroke="#c4c4c4" stroke-width="0.8"/>
<line x1="945" x2="946.6" y1="207.1" y2="207.1" stroke="#c4c4c4" stroke-width="0.8"/>
<line x1="945" x2="946.6" y1="216.5" y2="216.5" stroke="#c4c4c4" stroke-width="0.8"/>
<line x1="945" x2="946.6" y1="221.2" y2="221.2" stroke="#c4c4c4" stroke-width="0.8"/>
<line x1="945" x2="946.6" y1="225.9" y2="225.9" stroke="#c4c4c4" stroke-width="0.8"/>
<line x1="945" x2="946.6" y1="230.6" y2="230.6" stroke="#c4c4c4" stroke-width="0.8"/>
<line x1="945" x2="946.6" y1="240.1" y2="240.1" stroke="#c4c4c4" stroke-width="0.8"/>
<line x1="945" x2="946.6" y1="244.8" y2="244.8" stroke="#c4c4c4" stroke-width="0.8"/>
<line x1="945" x2="946.6" y1="249.5" y2="249.5" stroke="#c4c4c4" stroke-width="0.8"/>
<line x1="945" x2="946.6" y1="254.2" y2="254.2" stroke="#c4c4c4" stroke-width="0.8"/>
<line x1="945" x2="946.6" y1="263.6" y2="263.6" stroke="#c4c4c4" stroke-width="0.8"/>
<line x1="945" x2="946.6" y1="268.3" y2="268.3" stroke="#c4c4c4" stroke-width="0.8"/>
<line x1="945" x2="946.6" y1="273.0" y2="273.0" stroke="#c4c4c4" stroke-width="0.8"/>
<line x1="945" x2="946.6" y1="277.7" y2="277.7" stroke="#c4c4c4" stroke-width="0.8"/>
<line x1="945" x2="946.6" y1="287.2" y2="287.2" stroke="#c4c4c4" stroke-width="0.8"/>
<line x1="945" x2="946.6" y1="291.9" y2="291.9" stroke="#c4c4c4" stroke-width="0.8"/>
<line x1="945" x2="946.6" y1="296.6" y2="296.6" stroke="#c4c4c4" stroke-width="0.8"/>
<line x1="945" x2="946.6" y1="301.3" y2="301.3" stroke="#c4c4c4" stroke-width="0.8"/>
<line x1="945" x2="946.6" y1="310.7" y2="310.7" stroke="#c4c4c4" stroke-width="0.8"/>
<line x1="945" x2="946.6" y1="315.4" y2="315.4" stroke="#c4c4c4" stroke-width="0.8"/>
<line x1="945" x2="946.6" y1="320.1" y2="320.1" stroke="#c4c4c4" stroke-width="0.8"/>
<line x1="945" x2="946.6" y1="324.8" y2="324.8" stroke="#c4c4c4" stroke-width="0.8"/>
<line x1="945" x2="946.6" y1="334.3" y2="334.3" stroke="#c4c4c4" stroke-width="0.8"/>
<line x1="945" x2="946.6" y1="339.0" y2="339.0" stroke="#c4c4c4" stroke-width="0.8"/>
<line x1="945" x2="946.6" y1="343.7" y2="343.7" stroke="#c4c4c4" stroke-width="0.8"/>
<line x1="945" x2="946.6" y1="348.4" y2="348.4" stroke="#c4c4c4" stroke-width="0.8"/>
<line x1="945" x2="946.6" y1="357.8" y2="357.8" stroke="#c4c4c4" stroke-width="0.8"/>
<line x1="945" x2="946.6" y1="362.5" y2="362.5" stroke="#c4c4c4" stroke-width="0.8"/>
<line x1="945" x2="946.6" y1="367.2" y2="367.2" stroke="#c4c4c4" stroke-width="0.8"/>
<line x1="945" x2="946.6" y1="371.9" y2="371.9" stroke="#c4c4c4" stroke-width="0.8"/>
<line x1="945" x2="946.6" y1="381.4" y2="381.4" stroke="#c4c4c4" stroke-width="0.8"/>
<line x1="945" x2="946.6" y1="386.1" y2="386.1" stroke="#c4c4c4" stroke-width="0.8"/>
<line x1="945" x2="946.6" y1="390.8" y2="390.8" stroke="#c4c4c4" stroke-width="0.8"/>
<line x1="945" x2="946.6" y1="395.5" y2="395.5" stroke="#c4c4c4" stroke-width="0.8"/>
<line x1="945" x2="946.6" y1="404.9" y2="404.9" stroke="#c4c4c4" stroke-width="0.8"/>
<path d="M943.5,236.5 l5,-4.2 v8.4 z" fill="#0000d8"/>
<line x1="133" x2="992" y1="427.4" y2="427.4" stroke="#777" stroke-width="1"/>
<line x1="133" x2="992" y1="444.4" y2="444.4" stroke="#777" stroke-width="1"/>
<line x1="944.8" x2="944.8" y1="53" y2="531" stroke="#d0d0d0" stroke-width="1"/>
<rect x="133.6" y="441.8" width="5.2" height="1.6" fill="#c81e3c"/>
<rect x="138.7" y="441.8" width="5.2" height="1.6" fill="#3c1eb4"/>
<rect x="143.8" y="441.8" width="5.2" height="1.6" fill="#c81e3c"/>
<rect x="149.0" y="441.8" width="5.2" height="1.6" fill="#3c1eb4"/>
<rect x="154.1" y="441.8" width="5.2" height="1.6" fill="#c81e3c"/>
<rect x="159.3" y="441.8" width="5.2" height="1.6" fill="#3c1eb4"/>
<rect x="164.6" y="441.8" width="5.2" height="1.6" fill="#c81e3c"/>
<rect x="169.6" y="441.8" width="5.2" height="1.6" fill="#3c1eb4"/>
<rect x="174.9" y="441.8" width="5.2" height="1.6" fill="#c81e3c"/>
<rect x="180.1" y="441.8" width="5.2" height="1.6" fill="#3c1eb4"/>
<rect x="185.2" y="441.8" width="5.2" height="1.6" fill="#c81e3c"/>
<rect x="190.4" y="441.8" width="5.2" height="1.6" fill="#3c1eb4"/>
<rect x="195.5" y="441.8" width="5.2" height="1.6" fill="#c81e3c"/>
<rect x="200.8" y="441.8" width="5.2" height="1.6" fill="#3c1eb4"/>
<rect x="206.0" y="441.8" width="5.2" height="1.6" fill="#c81e3c"/>
<rect x="211.1" y="441.8" width="5.2" height="1.6" fill="#3c1eb4"/>
<rect x="216.3" y="441.8" width="5.2" height="1.6" fill="#c81e3c"/>
<rect x="221.6" y="441.8" width="5.2" height="1.6" fill="#3c1eb4"/>
<rect x="226.7" y="441.8" width="5.2" height="1.6" fill="#c81e3c"/>
<rect x="231.9" y="441.8" width="5.2" height="1.6" fill="#3c1eb4"/>
<rect x="237.0" y="441.8" width="5.2" height="1.6" fill="#c81e3c"/>
<rect x="242.2" y="441.8" width="5.2" height="1.6" fill="#3c1eb4"/>
<rect x="247.5" y="441.8" width="5.2" height="1.6" fill="#c81e3c"/>
<rect x="252.6" y="441.8" width="5.2" height="1.6" fill="#3c1eb4"/>
<rect x="257.8" y="441.8" width="5.2" height="1.6" fill="#c81e3c"/>
<rect x="262.9" y="441.8" width="5.2" height="1.6" fill="#3c1eb4"/>
<rect x="268.1" y="441.8" width="5.2" height="1.6" fill="#c81e3c"/>
<rect x="273.2" y="441.8" width="5.2" height="1.6" fill="#3c1eb4"/>
<rect x="278.4" y="441.8" width="5.2" height="1.6" fill="#c81e3c"/>
<rect x="283.7" y="441.8" width="5.2" height="1.6" fill="#3c1eb4"/>
<rect x="288.9" y="441.8" width="5.2" height="1.6" fill="#c81e3c"/>
<rect x="294.0" y="441.8" width="5.2" height="1.6" fill="#3c1eb4"/>
<rect x="299.4" y="441.8" width="5.2" height="1.6" fill="#c81e3c"/>
<rect x="304.5" y="441.8" width="5.2" height="1.6" fill="#3c1eb4"/>
<rect x="309.7" y="441.8" width="5.2" height="1.6" fill="#c81e3c"/>
<rect x="314.8" y="441.8" width="5.2" height="1.6" fill="#3c1eb4"/>
<rect x="320.1" y="441.8" width="5.2" height="1.6" fill="#c81e3c"/>
<rect x="325.3" y="441.8" width="5.2" height="1.6" fill="#3c1eb4"/>
<rect x="330.6" y="441.8" width="5.2" height="1.6" fill="#c81e3c"/>
<rect x="335.9" y="441.8" width="5.2" height="1.6" fill="#3c1eb4"/>
<rect x="341.1" y="441.8" width="5.2" height="1.6" fill="#c81e3c"/>
<rect x="346.2" y="441.8" width="5.2" height="1.6" fill="#3c1eb4"/>
<rect x="351.4" y="441.8" width="5.2" height="1.6" fill="#c81e3c"/>
<rect x="356.5" y="441.8" width="5.2" height="1.6" fill="#3c1eb4"/>
<rect x="361.8" y="441.8" width="5.2" height="1.6" fill="#c81e3c"/>
<rect x="367.2" y="441.8" width="5.2" height="1.6" fill="#3c1eb4"/>
<rect x="372.3" y="441.8" width="5.2" height="1.6" fill="#c81e3c"/>
<rect x="377.4" y="441.8" width="5.2" height="1.6" fill="#3c1eb4"/>
<rect x="382.8" y="441.8" width="5.2" height="1.6" fill="#c81e3c"/>
<rect x="387.9" y="441.8" width="5.2" height="1.6" fill="#3c1eb4"/>
<rect x="393.1" y="441.8" width="5.2" height="1.6" fill="#c81e3c"/>
<rect x="398.2" y="441.8" width="5.2" height="1.6" fill="#3c1eb4"/>
<rect x="403.7" y="441.8" width="5.2" height="1.6" fill="#c81e3c"/>
<rect x="408.8" y="441.8" width="5.2" height="1.6" fill="#3c1eb4"/>
<rect x="414.0" y="441.8" width="5.2" height="1.6" fill="#c81e3c"/>
<rect x="419.3" y="441.8" width="5.2" height="1.6" fill="#3c1eb4"/>
<rect x="424.6" y="441.8" width="5.2" height="1.6" fill="#c81e3c"/>
<rect x="429.6" y="441.8" width="5.2" height="1.6" fill="#3c1eb4"/>
<rect x="434.8" y="441.8" width="5.2" height="1.6" fill="#c81e3c"/>
<rect x="439.9" y="441.8" width="5.2" height="1.6" fill="#3c1eb4"/>
<rect x="445.1" y="441.8" width="5.2" height="1.6" fill="#c81e3c"/>
<rect x="450.4" y="441.8" width="5.2" height="1.6" fill="#3c1eb4"/>
<rect x="455.7" y="441.8" width="5.2" height="1.6" fill="#c81e3c"/>
<rect x="460.8" y="441.8" width="5.2" height="1.6" fill="#3c1eb4"/>
<rect x="466.0" y="441.8" width="5.2" height="1.6" fill="#c81e3c"/>
<rect x="471.4" y="441.8" width="5.2" height="1.6" fill="#3c1eb4"/>
<rect x="476.5" y="441.8" width="5.2" height="1.6" fill="#c81e3c"/>
<rect x="481.5" y="441.8" width="5.2" height="1.6" fill="#3c1eb4"/>
<rect x="486.6" y="441.8" width="5.2" height="1.6" fill="#c81e3c"/>
<rect x="492.0" y="441.8" width="5.2" height="1.6" fill="#3c1eb4"/>
<rect x="497.3" y="441.8" width="5.2" height="1.6" fill="#c81e3c"/>
<rect x="502.3" y="441.8" width="5.2" height="1.6" fill="#3c1eb4"/>
<rect x="507.2" y="441.8" width="5.2" height="1.6" fill="#c81e3c"/>
<rect x="512.5" y="441.8" width="5.2" height="1.6" fill="#3c1eb4"/>
<rect x="518.0" y="441.8" width="5.2" height="1.6" fill="#c81e3c"/>
<rect x="523.2" y="441.8" width="5.2" height="1.6" fill="#3c1eb4"/>
<rect x="528.3" y="441.8" width="5.2" height="1.6" fill="#c81e3c"/>
<rect x="533.5" y="441.8" width="5.2" height="1.6" fill="#3c1eb4"/>
<rect x="538.8" y="441.8" width="5.2" height="1.6" fill="#c81e3c"/>
<rect x="543.9" y="441.8" width="5.2" height="1.6" fill="#3c1eb4"/>
<rect x="549.1" y="441.8" width="5.2" height="1.6" fill="#c81e3c"/>
<rect x="554.2" y="441.8" width="5.2" height="1.6" fill="#3c1eb4"/>
<rect x="559.6" y="441.8" width="5.2" height="1.6" fill="#c81e3c"/>
<rect x="564.7" y="441.8" width="5.2" height="1.6" fill="#3c1eb4"/>
<rect x="569.9" y="441.8" width="5.2" height="1.6" fill="#c81e3c"/>
<rect x="575.0" y="441.8" width="5.2" height="1.6" fill="#3c1eb4"/>
<rect x="580.3" y="441.8" width="5.2" height="1.6" fill="#c81e3c"/>
<rect x="585.5" y="441.8" width="5.2" height="1.6" fill="#3c1eb4"/>
<rect x="590.6" y="441.8" width="5.2" height="1.6" fill="#c81e3c"/>
<rect x="595.8" y="441.8" width="5.2" height="1.6" fill="#3c1eb4"/>
<rect x="601.1" y="441.8" width="5.2" height="1.6" fill="#c81e3c"/>
<rect x="606.2" y="441.8" width="5.2" height="1.6" fill="#3c1eb4"/>
<rect x="611.6" y="441.8" width="5.2" height="1.6" fill="#c81e3c"/>
<rect x="616.5" y="441.8" width="5.2" height="1.6" fill="#3c1eb4"/>
<rect x="621.7" y="441.8" width="5.2" height="1.6" fill="#c81e3c"/>
<rect x="627.1" y="441.8" width="5.2" height="1.6" fill="#3c1eb4"/>
<rect x="632.3" y="441.8" width="5.2" height="1.6" fill="#c81e3c"/>
<rect x="637.4" y="441.8" width="5.2" height="1.6" fill="#3c1eb4"/>
<rect x="642.4" y="441.8" width="5.2" height="1.6" fill="#c81e3c"/>
<rect x="647.5" y="441.8" width="5.2" height="1.6" fill="#3c1eb4"/>
<rect x="652.9" y="441.8" width="5.2" height="1.6" fill="#c81e3c"/>
<rect x="658.1" y="441.8" width="5.2" height="1.6" fill="#3c1eb4"/>
<rect x="663.2" y="441.8" width="5.2" height="1.6" fill="#c81e3c"/>
<rect x="668.6" y="441.8" width="5.2" height="1.6" fill="#3c1eb4"/>
<rect x="673.9" y="441.8" width="5.2" height="1.6" fill="#c81e3c"/>
<rect x="679.0" y="441.8" width="5.2" height="1.6" fill="#3c1eb4"/>
<rect x="684.0" y="441.8" width="5.2" height="1.6" fill="#c81e3c"/>
<rect x="689.3" y="441.8" width="5.2" height="1.6" fill="#3c1eb4"/>
<rect x="694.7" y="441.8" width="5.2" height="1.6" fill="#c81e3c"/>
<rect x="699.8" y="441.8" width="5.2" height="1.6" fill="#3c1eb4"/>
<rect x="705.0" y="441.8" width="5.2" height="1.6" fill="#c81e3c"/>
<rect x="710.3" y="441.8" width="5.2" height="1.6" fill="#3c1eb4"/>
<rect x="715.6" y="441.8" width="5.2" height="1.6" fill="#c81e3c"/>
<rect x="720.7" y="441.8" width="5.2" height="1.6" fill="#3c1eb4"/>
<rect x="725.9" y="441.8" width="5.2" height="1.6" fill="#c81e3c"/>
<rect x="730.9" y="441.8" width="5.2" height="1.6" fill="#3c1eb4"/>
<rect x="736.2" y="441.8" width="5.2" height="1.6" fill="#c81e3c"/>
<rect x="741.5" y="441.8" width="5.2" height="1.6" fill="#3c1eb4"/>
<rect x="746.7" y="441.8" width="5.2" height="1.6" fill="#c81e3c"/>
<rect x="751.8" y="441.8" width="5.2" height="1.6" fill="#3c1eb4"/>
<rect x="757.1" y="441.8" width="5.2" height="1.6" fill="#c81e3c"/>
<rect x="762.3" y="441.8" width="5.2" height="1.6" fill="#3c1eb4"/>
<rect x="767.4" y="441.8" width="5.2" height="1.6" fill="#c81e3c"/>
<rect x="772.6" y="441.8" width="5.2" height="1.6" fill="#3c1eb4"/>
<rect x="777.9" y="441.8" width="5.2" height="1.6" fill="#c81e3c"/>
<rect x="783.2" y="441.8" width="5.2" height="1.6" fill="#3c1eb4"/>
<rect x="788.3" y="441.8" width="5.2" height="1.6" fill="#c81e3c"/>
<rect x="793.3" y="441.8" width="5.2" height="1.6" fill="#3c1eb4"/>
<rect x="798.4" y="441.8" width="5.2" height="1.6" fill="#c81e3c"/>
<rect x="803.6" y="441.8" width="5.2" height="1.6" fill="#3c1eb4"/>
<rect x="808.9" y="441.8" width="5.2" height="1.6" fill="#c81e3c"/>
<rect x="814.0" y="441.8" width="5.2" height="1.6" fill="#3c1eb4"/>
<rect x="819.2" y="441.8" width="5.2" height="1.6" fill="#c81e3c"/>
<rect x="824.2" y="441.8" width="5.2" height="1.6" fill="#3c1eb4"/>
<rect x="829.8" y="441.8" width="5.2" height="1.6" fill="#c81e3c"/>
<rect x="835.0" y="441.8" width="5.2" height="1.6" fill="#3c1eb4"/>
<rect x="840.1" y="441.8" width="5.2" height="1.6" fill="#c81e3c"/>
<rect x="845.2" y="441.8" width="5.2" height="1.6" fill="#3c1eb4"/>
<rect x="850.5" y="441.8" width="5.2" height="1.6" fill="#c81e3c"/>
<rect x="855.8" y="441.8" width="5.2" height="1.6" fill="#3c1eb4"/>
<rect x="860.9" y="441.8" width="5.2" height="1.6" fill="#c81e3c"/>
<rect x="866.1" y="441.8" width="5.2" height="1.6" fill="#3c1eb4"/>
<rect x="871.4" y="441.8" width="5.2" height="1.6" fill="#c81e3c"/>
<rect x="876.6" y="441.8" width="5.2" height="1.6" fill="#3c1eb4"/>
<rect x="881.7" y="441.8" width="5.2" height="1.6" fill="#c81e3c"/>
<rect x="886.8" y="441.8" width="5.2" height="1.6" fill="#3c1eb4"/>
<rect x="891.9" y="441.8" width="5.2" height="1.6" fill="#c81e3c"/>
<rect x="897.3" y="441.8" width="5.2" height="1.6" fill="#3c1eb4"/>
<rect x="902.6" y="441.8" width="5.2" height="1.6" fill="#c81e3c"/>
<rect x="907.8" y="441.8" width="5.2" height="1.6" fill="#3c1eb4"/>
<rect x="299.5" y="440.2" width="4.6" height="3.2" fill="#c8102e"/>
<line x1="133" x2="943" y1="483.6" y2="483.6" stroke="#f8b4d6" stroke-width="1"/>
<rect x="134.2" y="483.6" width="4" height="2.6" fill="#90c8f6"/>
<rect x="139.3" y="483.6" width="4" height="4.1" fill="#90c8f6"/>
<rect x="144.4" y="483.6" width="4" height="5.0" fill="#90c8f6"/>
<rect x="149.6" y="483.6" width="4" height="4.9" fill="#90c8f6"/>
<rect x="154.7" y="483.6" width="4" height="3.9" fill="#90c8f6"/>
<rect x="159.9" y="483.6" width="4" height="3.0" fill="#90c8f6"/>
<rect x="165.2" y="483.6" width="4" height="2.0" fill="#90c8f6"/>
<rect x="170.2" y="483.6" width="4" height="1.5" fill="#90c8f6"/>
<rect x="175.5" y="483.6" width="4" height="1.4" fill="#90c8f6"/>
<rect x="180.7" y="483.6" width="4" height="0.8" fill="#90c8f6"/>
<rect x="185.8" y="483.2" width="4" height="0.4" fill="#f79ac6"/>
<rect x="191.0" y="483.6" width="4" height="1.0" fill="#90c8f6"/>
<rect x="196.1" y="483.6" width="4" height="1.0" fill="#90c8f6"/>
<rect x="201.4" y="483.6" width="4" height="1.0" fill="#90c8f6"/>
<rect x="206.6" y="483.6" width="4" height="1.2" fill="#90c8f6"/>
<rect x="211.7" y="483.6" width="4" height="1.2" fill="#90c8f6"/>
<rect x="216.9" y="483.6" width="4" height="1.5" fill="#90c8f6"/>
<rect x="222.2" y="483.6" width="4" height="1.5" fill="#90c8f6"/>
<rect x="227.3" y="483.6" width="4" height="1.5" fill="#90c8f6"/>
<rect x="232.5" y="483.6" width="4" height="1.5" fill="#90c8f6"/>
<rect x="237.6" y="483.6" width="4" height="1.8" fill="#90c8f6"/>
<rect x="242.8" y="483.6" width="4" height="2.0" fill="#90c8f6"/>
<rect x="248.1" y="483.6" width="4" height="3.5" fill="#90c8f6"/>
<rect x="253.2" y="483.6" width="4" height="4.5" fill="#90c8f6"/>
<rect x="258.4" y="483.6" width="4" height="3.9" fill="#90c8f6"/>
<rect x="263.5" y="483.6" width="4" height="2.2" fill="#90c8f6"/>
<rect x="268.7" y="483.2" width="4" height="0.4" fill="#f79ac6"/>
<rect x="273.8" y="482.6" width="4" height="1.0" fill="#f79ac6"/>
<rect x="279.0" y="482.1" width="4" height="1.5" fill="#f79ac6"/>
<rect x="284.3" y="481.6" width="4" height="2.0" fill="#f79ac6"/>
<rect x="289.5" y="481.1" width="4" height="2.5" fill="#f79ac6"/>
<rect x="294.6" y="481.1" width="4" height="2.5" fill="#f79ac6"/>
<rect x="300.0" y="476.6" width="4" height="7.0" fill="#f79ac6"/>
<rect x="305.1" y="474.6" width="4" height="9.0" fill="#f79ac6"/>
<rect x="310.3" y="472.5" width="4" height="11.1" fill="#f79ac6"/>
<rect x="315.4" y="471.7" width="4" height="11.9" fill="#f79ac6"/>
<rect x="320.7" y="472.7" width="4" height="10.9" fill="#f79ac6"/>
<rect x="325.9" y="474.0" width="4" height="9.6" fill="#f79ac6"/>
<rect x="331.2" y="476.3" width="4" height="7.3" fill="#f79ac6"/>
<rect x="336.5" y="479.2" width="4" height="4.4" fill="#f79ac6"/>
<rect x="341.7" y="480.9" width="4" height="2.7" fill="#f79ac6"/>
<rect x="346.8" y="481.9" width="4" height="1.7" fill="#f79ac6"/>
<rect x="352.0" y="483.0" width="4" height="0.6" fill="#f79ac6"/>
<rect x="357.1" y="483.6" width="4" height="1.4" fill="#90c8f6"/>
<rect x="362.4" y="483.6" width="4" height="3.6" fill="#90c8f6"/>
<rect x="367.8" y="483.6" width="4" height="5.3" fill="#90c8f6"/>
<rect x="372.9" y="483.6" width="4" height="6.0" fill="#90c8f6"/>
<rect x="378.0" y="483.6" width="4" height="6.0" fill="#90c8f6"/>
<rect x="383.4" y="483.6" width="4" height="6.0" fill="#90c8f6"/>
<rect x="388.5" y="483.6" width="4" height="6.0" fill="#90c8f6"/>
<rect x="393.7" y="483.6" width="4" height="6.0" fill="#90c8f6"/>
<rect x="398.8" y="483.6" width="4" height="5.4" fill="#90c8f6"/>
<rect x="404.3" y="483.6" width="4" height="1.7" fill="#90c8f6"/>
<rect x="409.4" y="483.6" width="4" height="0.7" fill="#90c8f6"/>
<rect x="414.6" y="482.9" width="4" height="0.7" fill="#f79ac6"/>
<rect x="419.9" y="481.2" width="4" height="2.4" fill="#f79ac6"/>
<rect x="425.2" y="479.5" width="4" height="4.1" fill="#f79ac6"/>
<rect x="430.2" y="479.0" width="4" height="4.6" fill="#f79ac6"/>
<rect x="435.4" y="478.5" width="4" height="5.1" fill="#f79ac6"/>
<rect x="440.5" y="477.6" width="4" height="6.0" fill="#f79ac6"/>
<rect x="445.7" y="477.9" width="4" height="5.7" fill="#f79ac6"/>
<rect x="451.0" y="479.8" width="4" height="3.8" fill="#f79ac6"/>
<rect x="456.3" y="481.1" width="4" height="2.5" fill="#f79ac6"/>
<rect x="461.4" y="482.7" width="4" height="0.9" fill="#f79ac6"/>
<rect x="466.6" y="483.1" width="4" height="0.5" fill="#f79ac6"/>
<rect x="482.1" y="483.6" width="4" height="0.8" fill="#90c8f6"/>
<rect x="487.2" y="483.6" width="4" height="1.8" fill="#90c8f6"/>
<rect x="492.6" y="483.6" width="4" height="2.9" fill="#90c8f6"/>
<rect x="497.9" y="483.6" width="4" height="3.0" fill="#90c8f6"/>
<rect x="502.9" y="483.6" width="4" height="1.5" fill="#90c8f6"/>
<rect x="507.8" y="483.6" width="4" height="0.3" fill="#90c8f6"/>
<rect x="513.1" y="483.6" width="4" height="0.9" fill="#90c8f6"/>
<rect x="518.6" y="483.6" width="4" height="1.5" fill="#90c8f6"/>
<rect x="523.8" y="483.6" width="4" height="1.5" fill="#90c8f6"/>
<rect x="528.9" y="483.6" width="4" height="1.5" fill="#90c8f6"/>
<rect x="534.1" y="483.6" width="4" height="1.0" fill="#90c8f6"/>
<rect x="539.4" y="483.6" width="4" height="0.8" fill="#90c8f6"/>
<rect x="544.5" y="483.6" width="4" height="0.4" fill="#90c8f6"/>
<rect x="549.7" y="483.0" width="4" height="0.6" fill="#f79ac6"/>
<rect x="554.8" y="482.5" width="4" height="1.1" fill="#f79ac6"/>
<rect x="560.2" y="482.1" width="4" height="1.5" fill="#f79ac6"/>
<rect x="565.3" y="482.1" width="4" height="1.5" fill="#f79ac6"/>
<rect x="570.5" y="482.1" width="4" height="1.5" fill="#f79ac6"/>
<rect x="575.6" y="482.1" width="4" height="1.5" fill="#f79ac6"/>
<rect x="580.9" y="482.1" width="4" height="1.5" fill="#f79ac6"/>
<rect x="586.1" y="482.1" width="4" height="1.5" fill="#f79ac6"/>
<rect x="591.2" y="482.2" width="4" height="1.4" fill="#f79ac6"/>
<rect x="596.4" y="482.6" width="4" height="1.0" fill="#f79ac6"/>
<rect x="601.7" y="482.6" width="4" height="1.0" fill="#f79ac6"/>
<rect x="606.8" y="482.7" width="4" height="0.9" fill="#f79ac6"/>
<rect x="612.2" y="483.1" width="4" height="0.5" fill="#f79ac6"/>
<rect x="617.1" y="483.3" width="4" height="0.3" fill="#f79ac6"/>
<rect x="622.3" y="482.3" width="4" height="1.3" fill="#f79ac6"/>
<rect x="627.7" y="480.1" width="4" height="3.5" fill="#f79ac6"/>
<rect x="632.9" y="480.3" width="4" height="3.3" fill="#f79ac6"/>
<rect x="638.0" y="481.2" width="4" height="2.4" fill="#f79ac6"/>
<rect x="643.0" y="482.5" width="4" height="1.1" fill="#f79ac6"/>
<rect x="648.1" y="483.2" width="4" height="0.4" fill="#f79ac6"/>
<rect x="658.7" y="483.6" width="4" height="0.6" fill="#90c8f6"/>
<rect x="663.8" y="483.6" width="4" height="1.7" fill="#90c8f6"/>
<rect x="669.2" y="483.6" width="4" height="3.2" fill="#90c8f6"/>
<rect x="674.5" y="483.6" width="4" height="2.7" fill="#90c8f6"/>
<rect x="679.6" y="482.6" width="4" height="1.0" fill="#f79ac6"/>
<rect x="684.6" y="481.1" width="4" height="2.5" fill="#f79ac6"/>
<rect x="689.9" y="481.1" width="4" height="2.5" fill="#f79ac6"/>
<rect x="695.3" y="480.1" width="4" height="3.5" fill="#f79ac6"/>
<rect x="700.4" y="478.6" width="4" height="5.0" fill="#f79ac6"/>
<rect x="705.6" y="478.8" width="4" height="4.8" fill="#f79ac6"/>
<rect x="710.9" y="478.9" width="4" height="4.7" fill="#f79ac6"/>
<rect x="716.2" y="478.1" width="4" height="5.6" fill="#f79ac6"/>
<rect x="721.3" y="477.1" width="4" height="6.5" fill="#f79ac6"/>
<rect x="726.5" y="477.4" width="4" height="6.2" fill="#f79ac6"/>
<rect x="731.5" y="478.7" width="4" height="4.9" fill="#f79ac6"/>
<rect x="736.8" y="481.0" width="4" height="2.6" fill="#f79ac6"/>
<rect x="747.3" y="483.6" width="4" height="1.9" fill="#90c8f6"/>
<rect x="752.4" y="483.6" width="4" height="3.2" fill="#90c8f6"/>
<rect x="757.7" y="483.6" width="4" height="4.0" fill="#90c8f6"/>
<rect x="762.9" y="483.6" width="4" height="3.6" fill="#90c8f6"/>
<rect x="768.0" y="483.6" width="4" height="2.4" fill="#90c8f6"/>
<rect x="773.2" y="483.6" width="4" height="4.5" fill="#90c8f6"/>
<rect x="778.5" y="483.6" width="4" height="6.6" fill="#90c8f6"/>
<rect x="783.8" y="483.6" width="4" height="8.4" fill="#90c8f6"/>
<rect x="788.9" y="483.6" width="4" height="8.7" fill="#90c8f6"/>
<rect x="793.9" y="483.6" width="4" height="7.9" fill="#90c8f6"/>
<rect x="799.0" y="483.6" width="4" height="7.5" fill="#90c8f6"/>
<rect x="804.2" y="483.6" width="4" height="7.4" fill="#90c8f6"/>
<rect x="809.5" y="483.6" width="4" height="7.2" fill="#90c8f6"/>
<rect x="814.6" y="483.6" width="4" height="7.5" fill="#90c8f6"/>
<rect x="819.8" y="483.6" width="4" height="7.3" fill="#90c8f6"/>
<rect x="824.8" y="483.6" width="4" height="6.1" fill="#90c8f6"/>
<rect x="830.4" y="483.6" width="4" height="3.9" fill="#90c8f6"/>
<rect x="835.6" y="483.6" width="4" height="3.0" fill="#90c8f6"/>
<rect x="840.7" y="483.6" width="4" height="1.8" fill="#90c8f6"/>
<rect x="845.8" y="483.6" width="4" height="1.4" fill="#90c8f6"/>
<rect x="851.1" y="483.6" width="4" height="1.0" fill="#90c8f6"/>
<rect x="856.4" y="483.6" width="4" height="1.0" fill="#90c8f6"/>
<rect x="861.5" y="483.6" width="4" height="0.8" fill="#90c8f6"/>
<rect x="866.7" y="483.6" width="4" height="0.4" fill="#90c8f6"/>
<rect x="872.0" y="483.6" width="4" height="0.3" fill="#90c8f6"/>
<rect x="882.3" y="481.3" width="4" height="2.3" fill="#f79ac6"/>
<rect x="887.4" y="479.4" width="4" height="4.2" fill="#f79ac6"/>
<rect x="892.5" y="480.4" width="4" height="3.2" fill="#f79ac6"/>
<rect x="897.9" y="481.2" width="4" height="2.4" fill="#f79ac6"/>
<rect x="903.2" y="481.7" width="4" height="1.9" fill="#f79ac6"/>
<rect x="908.4" y="482.1" width="4" height="1.5" fill="#f79ac6"/>
<polyline points="136.0,489.6 152.0,493.0 170.0,495.0 188.0,494.4 210.0,495.6 238.0,498.0 258.0,501.0 270.0,501.6 286.0,500.0 298.0,498.6 310.0,492.0 320.0,487.0 330.0,484.0 340.0,482.6 348.0,478.6 360.0,479.0 374.0,482.0 390.0,486.0 400.0,489.0 420.0,489.0 438.0,485.4 450.0,481.0 470.0,481.0 486.0,481.0 500.0,483.0 522.0,483.4 534.8,484.8 550.0,483.0 580.0,481.0 610.0,479.4 624.0,478.6 642.0,475.4 658.0,475.4 678.0,477.6 696.0,475.0 710.0,471.0 722.0,468.0 734.8,465.5 740.0,464.0 750.0,464.6 770.0,468.0 786.0,472.0 800.0,476.6 818.0,482.6 834.0,487.0 854.0,488.0 880.0,488.6 894.0,486.6 911.0,483.4" fill="none" stroke="#4d86f0" stroke-width="1"/>
<polyline points="136.0,491.0 151.0,498.0 160.0,495.4 178.0,495.4 188.0,493.6 198.0,495.4 216.0,497.4 238.0,499.0 256.0,503.6 266.0,503.6 278.0,500.0 288.0,497.6 297.0,496.0 308.0,484.0 318.0,478.0 330.0,474.5 338.0,475.4 350.0,476.4 360.0,480.0 380.0,490.4 399.0,494.0 406.0,490.0 413.0,490.0 424.0,484.4 436.0,481.4 447.0,476.4 460.0,480.0 470.0,480.0 484.0,481.4 492.0,484.0 500.0,483.4 510.0,482.4 522.0,483.4 534.8,484.4 548.0,483.0 570.0,480.4 594.0,477.6 620.0,478.4 633.0,472.6 646.0,473.6 662.0,476.4 676.0,481.0 684.0,474.6 696.0,471.4 706.0,466.6 714.0,465.6 727.0,460.0 734.8,460.2 742.0,463.0 758.0,470.0 772.0,470.4 784.0,479.0 796.0,483.0 816.0,485.0 827.0,492.0 842.0,488.6 866.0,489.0 880.0,488.6 888.0,483.0 900.0,484.0 911.0,483.4" fill="none" stroke="#f58a3c" stroke-width="1"/>
<rect x="133" y="508.5" width="859" height="12" fill="#efefef"/>
<line x1="133" x2="992" y1="508.5" y2="508.5" stroke="#c8c8c8"/>
<line x1="133" x2="992" y1="520.6" y2="520.6" stroke="#c8c8c8"/>
<rect x="133" y="521" width="859" height="10" fill="#f4f4f4"/>
<rect x="133.4" y="521.4" width="11" height="9" fill="#f4f4f4" stroke="#aaa" stroke-width="0.7"/><path d="M140.6,523.6 v4.6 l-3,-2.3 z" fill="#222"/>
<rect x="145" y="521.4" width="591" height="9" fill="#fbfbfb"/>
<rect x="736" y="521.4" width="32.2" height="9" fill="#ececec" stroke="#b4b4b4" stroke-width="0.7"/>
<rect x="768.8" y="521.4" width="10" height="9" fill="#f4f4f4" stroke="#aaa" stroke-width="0.7"/><path d="M772.4,523.6 v4.6 l3,-2.3 z" fill="#222"/>
<path d="M784.4,523.3 v5.2" stroke="#333" fill="none" stroke-width="0.9"/><path d="M789.4,523.3 v5.2 l-3.6,-2.6 z" fill="#333"/>
<rect x="795.4" y="523.1" width="1.6" height="5.6" fill="#333"/><rect x="798.4" y="523.1" width="1.6" height="5.6" fill="#333"/>
<path d="M810.6,523.3 v5.2" stroke="#333" fill="none" stroke-width="0.9"/><path d="M805.6,523.3 v5.2 l3.6,-2.6 z" fill="#333"/>
<path d="M818,523.5 h44.6" stroke="#555" stroke-width="0.8"/>
<path d="M818.4,530.5 v-2.6 M821.1,530.5 v-1.6 M823.9,530.5 v-1.6 M826.6,530.5 v-1.6 M829.4,530.5 v-2.6 M832.1,530.5 v-1.6 M834.9,530.5 v-1.6 M837.6,530.5 v-1.6 M840.4,530.5 v-2.6 M843.1,530.5 v-1.6 M845.9,530.5 v-1.6 M848.6,530.5 v-1.6 M851.4,530.5 v-2.6 M854.1,530.5 v-1.6 M856.9,530.5 v-1.6 M859.6,530.5 v-1.6 M862.4,530.5 v-2.6 " stroke="#555" stroke-width="0.7"/>
<rect x="820.2" y="521.5" width="2.8" height="4.6" rx="1" fill="#fff" stroke="#333" stroke-width="0.8"/>
<circle cx="871.2" cy="525.9" r="3.3" stroke="#333" fill="none" stroke-width="0.9"/><path d="M869.4,525.9 h3.6" stroke="#333" fill="none" stroke-width="0.9"/>
<circle cx="882.5" cy="525.9" r="3.3" stroke="#333" fill="none" stroke-width="0.9"/><path d="M880.7,525.9 h3.6 M882.5,524.1 v3.6" stroke="#333" fill="none" stroke-width="0.9"/>
<circle cx="905.2" cy="525.9" r="1.9" stroke="#333" fill="none" stroke-width="1.5"/><path d="M907.60,525.90 L909.10,525.90 M906.90,527.60 L907.96,528.66 M905.20,528.30 L905.20,529.80 M903.50,527.60 L902.44,528.66 M902.80,525.90 L901.30,525.90 M903.50,524.20 L902.44,523.14 M905.20,523.50 L905.20,522.00 M906.90,524.20 L907.96,523.14 " stroke="#333" stroke-width="1.2"/>
<path d="M913.6,522.5 h6.8 M914.6,522.5 l1.6,2.6 v4 h1.6 v-4 l1.6,-2.6" stroke="#333" fill="none" stroke-width="0.9"/>
<path d="M925.4,522.9 h6.2 v4.6 h-6.2 z M924.4,529.3 h4 M926.4,527.5 v1.8 M923.6,525.9 l2.4,1.2" stroke="#333" fill="none" stroke-width="0.9"/>
<rect x="933.6" y="521.5" width="10.8" height="8.8" fill="#e8e8e8" stroke="#aaa" stroke-width="0.7"/><path d="M935.6,523.3 h6.8 v5.2 h-6.8 z M935.6,525.1 h6.8 M938.4,525.1 v3.4" stroke="#333" fill="none" stroke-width="0.9"/>
<rect x="946.2" y="521.5" width="10.8" height="8.8" fill="#e8e8e8" stroke="#aaa" stroke-width="0.7"/><path d="M948.2,522.9 h6.8 v6 h-6.8 z" stroke="#333" fill="none" stroke-width="0.9"/><path d="M948.6,526.9 l2,-2 l1.6,1 l2.4,-2.6" stroke="#e02020" fill="none" stroke-width="0.9"/>
<path d="M959.4,525.9 h7.2 M963,522.3 v7.2" stroke="#333" fill="none" stroke-width="0.9"/>
<path d="M971.4,524.5 h5.4 v4.4 h-5.4 z M973,524.5 v-1.6 h5.4 v4.4 h-1.6" stroke="#333" fill="none" stroke-width="0.9"/>
<path d="M982,522.6999999999999 l6.6,6.4 M988.6,522.6999999999999 l-6.6,6.4 M982,524.5 v-1.8 h1.8 M988.6,524.5 v-1.8 h-1.8 M982,527.3 v1.8 h1.8 M988.6,527.3 v1.8 h-1.8" stroke="#333" fill="none" stroke-width="0.9"/>
<rect x="945.4" y="53.8" width="19.6" height="6.2" fill="#444"/><rect x="946.4" y="54.8" width="4.6" height="4.2" fill="#eee"/><rect x="952" y="54.8" width="3" height="4.2" fill="#eee"/><rect x="956" y="54.8" width="3" height="4.2" fill="#eee"/><rect x="960" y="54.8" width="4" height="4.2" fill="#eee"/>
<rect x="984.6" y="53.8" width="6.8" height="6.4" fill="#fff" stroke="#444" stroke-width="1.2"/><rect x="986.4" y="55.6" width="3.2" height="2.8" fill="#888"/>
<rect x="945.6" y="428" width="12.4" height="5.2" fill="#fff" stroke="#444" stroke-width="0.8"/><path d="M949.8,428 v5.2 M954,428 v5.2" stroke="#444" stroke-width="0.8"/>
<rect x="978.8" y="428" width="12.6" height="5.2" fill="#fff" stroke="#444" stroke-width="0.8"/><path d="M985,428 v5.2 M980.4,429.2 h3 v2.8 h-3 z M986.4,429 l3.4,3.2 M989.8,429 l-3.4,3.2" stroke="#444" fill="none" stroke-width="0.7"/>
<rect x="945.6" y="445" width="12.4" height="5.2" fill="#fff" stroke="#444" stroke-width="0.8"/><path d="M949.8,445 v5.2 M954,445 v5.2" stroke="#444" stroke-width="0.8"/>
<rect x="978.8" y="445" width="12.6" height="5.2" fill="#fff" stroke="#444" stroke-width="0.8"/><path d="M985,445 v5.2 M980.4,446.2 h3 v2.8 h-3 z M986.4,446 l3.4,3.2 M989.8,446 l-3.4,3.2" stroke="#444" fill="none" stroke-width="0.7"/>
<text x="310" y="232" font-size="8.6" fill="#222" text-anchor="middle" textLength="42" lengthAdjust="spacingAndGlyphs">배당락(0%)</text>
<text x="624" y="204.6" font-size="8.6" fill="#222" text-anchor="middle" textLength="42" lengthAdjust="spacingAndGlyphs">배당락(0%)</text>
<text x="894" y="151.3" font-size="8.6" fill="#222" text-anchor="middle" textLength="42" lengthAdjust="spacingAndGlyphs">배당락(0%)</text>
<text x="574.0" y="109.5" font-size="10.4" fill="#e02020" text-anchor="start" textLength="137.6" lengthAdjust="spacingAndGlyphs" >최고 26,250(2025/07/14, -20.19%)</text>
<text x="202.0" y="412.0" font-size="10.4" fill="#2a2aff" text-anchor="start" textLength="55.5" lengthAdjust="spacingAndGlyphs" >13,590(  9.*)</text>
<text x="276.0" y="416.0" font-size="10.4" fill="#2a2aff" text-anchor="start" textLength="137.6" lengthAdjust="spacingAndGlyphs" >최저 13,620(2023/10/23, +53.82%)</text>
<text x="873.0" y="301.0" font-size="10.4" fill="#2a2aff" text-anchor="start" textLength="68.3" lengthAdjust="spacingAndGlyphs" >18,202(+33.94 %)</text>
<text x="952.6" y="73.6" font-size="10.4" fill="#222" text-anchor="start" textLength="25.5" lengthAdjust="spacingAndGlyphs" >28,000</text>
<text x="952.6" y="97.1" font-size="10.4" fill="#222" text-anchor="start" textLength="25.5" lengthAdjust="spacingAndGlyphs" >27,000</text>
<text x="952.6" y="120.7" font-size="10.4" fill="#222" text-anchor="start" textLength="25.5" lengthAdjust="spacingAndGlyphs" >26,000</text>
<text x="952.6" y="144.2" font-size="10.4" fill="#222" text-anchor="start" textLength="25.5" lengthAdjust="spacingAndGlyphs" >25,000</text>
<text x="952.6" y="167.8" font-size="10.4" fill="#222" text-anchor="start" textLength="25.5" lengthAdjust="spacingAndGlyphs" >24,000</text>
<text x="952.6" y="191.3" font-size="10.4" fill="#222" text-anchor="start" textLength="25.5" lengthAdjust="spacingAndGlyphs" >23,000</text>
<text x="952.6" y="214.9" font-size="10.4" fill="#222" text-anchor="start" textLength="25.5" lengthAdjust="spacingAndGlyphs" >22,000</text>
<text x="952.6" y="238.4" font-size="10.4" fill="#222" text-anchor="start" textLength="25.5" lengthAdjust="spacingAndGlyphs" >21,000</text>
<text x="952.6" y="262.0" font-size="10.4" fill="#222" text-anchor="start" textLength="25.5" lengthAdjust="spacingAndGlyphs" >20,000</text>
<text x="952.6" y="285.6" font-size="10.4" fill="#222" text-anchor="start" textLength="25.5" lengthAdjust="spacingAndGlyphs" >19,000</text>
<text x="952.6" y="309.1" font-size="10.4" fill="#222" text-anchor="start" textLength="25.5" lengthAdjust="spacingAndGlyphs" >18,000</text>
<text x="952.6" y="332.7" font-size="10.4" fill="#222" text-anchor="start" textLength="25.5" lengthAdjust="spacingAndGlyphs" >17,000</text>
<text x="952.6" y="356.2" font-size="10.4" fill="#222" text-anchor="start" textLength="25.5" lengthAdjust="spacingAndGlyphs" >16,000</text>
<text x="952.6" y="379.8" font-size="10.4" fill="#222" text-anchor="start" textLength="25.5" lengthAdjust="spacingAndGlyphs" >15,000</text>
<text x="952.6" y="403.3" font-size="10.4" fill="#222" text-anchor="start" textLength="25.5" lengthAdjust="spacingAndGlyphs" >14,000</text>
<rect x="949" y="231.4" width="37" height="19.4" fill="#0a28ff"/>
<text x="951.0" y="239.6" font-size="10.4" fill="#fff" text-anchor="start" textLength="25.5" lengthAdjust="spacingAndGlyphs" >20,950</text>
<text x="951.0" y="248.8" font-size="10.4" fill="#fff" text-anchor="start" textLength="33.6" lengthAdjust="spacingAndGlyphs" >(-0.48%)</text>
<rect x="945.2" y="298.59999999999997" width="28.4" height="11.2" fill="#e6f5d8" stroke="#6a9a50" stroke-width="0.8"/>
<text x="947.0" y="307.3" font-size="10.4" fill="#111" text-anchor="start" textLength="25.5" lengthAdjust="spacingAndGlyphs" >18,079</text>
<rect x="945.2" y="315.09999999999997" width="28.4" height="11.2" fill="#e6f5d8" stroke="#6a9a50" stroke-width="0.8"/>
<text x="947.0" y="323.8" font-size="10.4" fill="#111" text-anchor="start" textLength="25.5" lengthAdjust="spacingAndGlyphs" >17,377</text>
<text x="981.0" y="471.1" font-size="10.4" fill="#222" text-anchor="end" textLength="21.2" lengthAdjust="spacingAndGlyphs" >1,000</text>
<text x="981.0" y="486.3" font-size="10.4" fill="#222" text-anchor="end" textLength="4.2" lengthAdjust="spacingAndGlyphs" >0</text>
<text x="981.0" y="501.7" font-size="10.4" fill="#222" text-anchor="end" textLength="25.5" lengthAdjust="spacingAndGlyphs" >-1,000</text>
<text x="134.0" y="517.2" font-size="10.4" fill="#111" text-anchor="start" textLength="29.8" lengthAdjust="spacingAndGlyphs" >2023/05</text>
<text x="312.0" y="517.2" font-size="10.4" fill="#111" text-anchor="start" textLength="29.8" lengthAdjust="spacingAndGlyphs" >2024/01</text>
<text x="588.0" y="517.2" font-size="10.4" fill="#111" text-anchor="start" textLength="29.8" lengthAdjust="spacingAndGlyphs" >2025/01</text>
<text x="858.0" y="517.2" font-size="10.4" fill="#111" text-anchor="start" textLength="29.8" lengthAdjust="spacingAndGlyphs" >2026/01</text>
<text x="952.0" y="517.2" font-size="10.4" fill="#111" text-anchor="start" textLength="21.2" lengthAdjust="spacingAndGlyphs" >04/20</text>
<text x="894" y="529.1" font-size="8.6" fill="#333" text-anchor="middle">A</text></svg>
<div class="a title"></div>
<div class="a" style="left:4.4px;top:3.4px;width:8.2px;height:8.2px;background:#d9730a"></div>
<div class="a" style="left:15px;top:3.4px;width:8.6px;height:8.2px;background:#777"></div>
<div class="a ledge"></div>
<div class="a" style="left:1016.2px;top:14.6px;width:3.4px;height:522px;background:#dfded9"></div>
<div class="a" style="left:1019.4px;top:14.6px;width:2px;height:522px;background:#bcbcb8"></div>
<div class="a" style="left:1021.4px;top:0;width:2.6px;height:536px;background:#dcdbd6"></div>
<svg class="a" style="left:920px;top:0" width="104" height="15" viewBox="920 0 104 15" fill="none" stroke="#d0d4cc" stroke-width="1"><path d="M927.5,5.5 h7 v6 h-7 z M925.5,3.5 l2,2 m-2,-2 h2 m-2,0 v2"/><path d="M939,5.5 h6.5 v6 h-6.5 z M941,5.5 v-2 h6.5 v6 h-2 M940.6,8.6 l1.4,1.4 l2.4,-3"/><path d="M952,5.5 h9 v6 h-9 z M954.5,5.5 l1,-1.6 h3 l1,1.6"/><circle cx="956.5" cy="8.5" r="1.6"/><circle cx="968.8" cy="7.4" r="2.3"/><path d="M968.8,3.2 v1.4 M968.8,10.2 v1.4 M964.6,7.4 h1.4 M971.6,7.4 h1.4 M965.8,4.4 l1,1 M970.8,9.4 l1,1 M965.8,10.4 l1,-1 M970.8,5.4 l1,-1"/><path d="M982,9.9 h6.4" stroke-width="1.4"/><rect x="994.3" y="4.3" width="7" height="6" stroke-width="1.3"/><path d="M1008.3,4 l6.2,6.6 M1014.5,4 l-6.2,6.6" stroke-width="1.3"/></svg>
<div class="btn" style="left:6px;width:13.0px;"><svg class="ic" style="left:0;top:0" width="13" height="13" viewBox="0 0 13 13"><path d="M6.4,4.6 l-1.8,1.8 l1.8,1.8 M8.6,4.6 l-1.8,1.8 l1.8,1.8" stroke="#999" fill="none" stroke-width="0.8"/></svg></div>
<div class="btn" style="left:21.5px;width:13.0px;"><svg class="ic" style="left:0;top:0" width="13" height="13" viewBox="0 0 13 13"><path d="M4.8,4.2 l1.8,1.8 l1.8,-1.8 M4.8,6.6 l1.8,1.8 l1.8,-1.8" stroke="#888" fill="none" stroke-width="0.8"/></svg></div>
<div class="btn" style="left:37px;width:13.0px;"></div>
<div class="btn" style="left:52.5px;width:23.0px;"><svg class="ic" style="left:0;top:0" width="23" height="13" viewBox="0 0 23 13"><path d="M21.6,9.4 v2.4 h-2.4 z" fill="#999"/></svg></div>
<div class="a" style="left:78px;top:20px;width:12.4px;height:12.8px;background:#1fa6ce;border-radius:2.6px"></div>
<div class="a" style="left:87.6px;top:29.6px;width:1.6px;height:1.8px;background:#fff"></div>
<div class="inp" style="left:92.5px;width:30.7px;"></div>
<div class="btn" style="left:123.2px;width:13.8px;background:#fff"><svg class="ic" style="left:0.6px;top:0" width="13" height="13" viewBox="0 0 13 13"><path d="M3.8,5.2 l2.2,2.2 l2.2,-2.2" stroke="#333" fill="none" stroke-width="1"/></svg></div>
<div class="btn" style="left:138.3px;width:13.0px;"><svg class="ic" style="left:0;top:0" width="13" height="13" viewBox="0 0 13 13"><circle cx="7" cy="5.6" r="2.3" stroke="#555" fill="none" stroke-width="0.9"/><path d="M5.4,7.4 l-2,2.2" stroke="#555" stroke-width="1"/></svg></div>
<div class="btn" style="left:153.3px;width:13.0px;"></div>
<div class="btn" style="left:168.6px;width:13.4px;"></div>
<div class="btn" style="left:183px;width:13.0px;"><svg class="ic" style="left:0;top:0" width="13" height="13" viewBox="0 0 13 13"><path d="M6.2,2.2 l2.2,2.6 h-4.4 z M6.2,10.8 l2.2,-2.6 h-4.4 z" fill="#444"/><path d="M2.2,6.5 h8" stroke="#888" stroke-width="0.7"/></svg></div>
<div class="a" style="left:199.4px;top:21.6px;width:1.4px;height:1.5px;background:#333;box-shadow:0 3px 0 #333,0 6px 0 #333,0 9px 0 #333"></div>
<div class="a" style="left:205.8px;top:19.5px;width:68.4px;height:13.6px;background:#e4e3df;border:0.7px solid #c8c8c4"></div>
<div class="a" style="left:206.8px;top:20.6px;width:12px;height:11.4px;background:#e04ad2"></div>
<svg class="ic" style="left:269.6px;top:28.6px" width="4" height="4" viewBox="0 0 4 4"><path d="M3.6,0.4 v3.2 h-3.2 z" fill="#aaa"/></svg>
<div class="btn" style="left:276.6px;width:10.6px;"></div>
<div class="btn" style="left:290.5px;width:13.5px;"></div>
<div class="btn" style="left:304.0px;width:13.5px;background:#333;border-color:#333"></div>
<div class="btn" style="left:317.5px;width:13.5px;"></div>
<div class="btn" style="left:331.0px;width:13.5px;"></div>
<div class="btn" style="left:344.5px;width:13.5px;"></div>
<div class="btn" style="left:358.0px;width:13.5px;"></div>
<div class="btn" style="left:373.6px;width:13.6px;"></div>
<div class="btn" style="left:387.25px;width:13.6px;"></div>
<div class="btn" style="left:400.9px;width:13.6px;"></div>
<div class="btn" style="left:414.54999999999995px;width:13.6px;"></div>
<div class="btn" style="left:428.19999999999993px;width:13.6px;"></div>
<div class="btn" style="left:441.8499999999999px;width:13.6px;"></div>
<div class="inp" style="left:458px;width:22.6px;background:#ececec"></div>
<div class="btn" style="left:480.6px;width:12.8px;background:#fff"><svg class="ic" style="left:0.2px;top:0" width="13" height="13" viewBox="0 0 13 13"><path d="M3.8,5.2 l2.2,2.2 l2.2,-2.2" stroke="#333" fill="none" stroke-width="1"/></svg></div>
<div class="inp" style="left:493.4px;width:47.0px;"></div>
<div class="btn" style="left:540.6px;width:12.6px;"><svg class="ic" style="left:0;top:0" width="13" height="13" viewBox="0 0 13 13"><rect x="2.8" y="3" width="6.6" height="6.4" stroke="#555" fill="none" stroke-width="0.9"/><path d="M2.8,5 h6.6" stroke="#555" stroke-width="0.9"/><rect x="4.4" y="6.4" width="3.4" height="1.6" fill="#999"/></svg></div>
<div class="btn" style="left:557px;width:13.0px;"></div>
<div class="inp" style="left:572.6px;width:32.4px;"></div>
<svg class="ic" style="left:605.2px;top:19.6px" width="9" height="13" viewBox="0 0 9 13"><path d="M4.4,2.4 l2.2,2.6 h-4.4 z M4.4,11 l2.2,-2.6 h-4.4 z" fill="#333"/></svg>
<div class="inp" style="left:624.6px;width:30.4px;"></div>
<div class="btn" style="left:657.6px;width:12.4px;"><svg class="ic" style="left:0;top:0" width="13" height="13" viewBox="0 0 13 13"><circle cx="5.2" cy="6.4" r="2.3" stroke="#aaa" fill="none" stroke-width="0.9"/><path d="M7,8.2 l1.8,1.8 M8.9,3.2 v2.6 M7.6,4.5 h2.6" stroke="#aaa" stroke-width="0.9"/></svg></div>
<div class="btn" style="left:672.6px;width:13.2px;"><svg class="ic" style="left:0;top:0" width="13" height="13" viewBox="0 0 13 13"><circle cx="6.4" cy="6.4" r="2.1" stroke="#333" fill="none" stroke-width="1.6"/><path d="M9.00,6.40 L10.60,6.40 M8.24,8.24 L9.37,9.37 M6.40,9.00 L6.40,10.60 M4.56,8.24 L3.43,9.37 M3.80,6.40 L2.20,6.40 M4.56,4.56 L3.43,3.43 M6.40,3.80 L6.40,2.20 M8.24,4.56 L9.37,3.43 " stroke="#333" stroke-width="1.3"/><path d="M12,9.6 v2.2 h-2.2 z" fill="#999"/></svg></div>
<div class="a" style="left:1011.6px;top:19.4px;width:5.2px;height:15px;background:#f6f6f4;border:0.7px solid #d4d4d0;border-right:none"></div>
<svg class="ic" style="left:1010.4px;top:20.5px" width="8" height="13" viewBox="0 0 8 13"><path d="M2.4,5 l1.4,1.4 l-1.4,1.4 M4.4,5 l1.4,1.4 l-1.4,1.4" stroke="#555" fill="none" stroke-width="0.6"/></svg>
<div class="tab" style="left:6px;width:40px"></div>
<div class="tab" style="left:84.5px;width:39.5px"></div>
<div class="a" style="left:6px;top:54.8px;width:122px;height:1px;background:#555"></div>
<div class="tab" style="left:45.5px;top:38.4px;width:39.4px;height:17.6px;background:#fff;border:0.9px solid #444;border-bottom:none"></div>
<div class="a" style="left:6.5px;top:56px;width:121px;height:474px;background:#eeeeec"></div>
<div class="a" style="left:8.6px;top:59.6px;width:86.6px;height:12.8px;background:#fff;border:0.7px solid #cfcfcf"></div>
<div class="a" style="left:95.4px;top:59.6px;width:13px;height:12.8px;background:#f8f8f8;border:0.7px solid #cfcfcf"></div>
<svg class="ic" style="left:95.4px;top:59.6px" width="13" height="13" viewBox="0 0 13 13"><circle cx="5.8" cy="5.6" r="2.5" stroke="#555" fill="none" stroke-width="0.9"/><path d="M7.6,7.6 l2,2.2" stroke="#555" stroke-width="1"/></svg>
<div class="a" style="left:111.6px;top:59.6px;width:12.8px;height:12.8px;background:#f8f8f8;border:0.7px solid #cfcfcf"></div>
<svg class="ic" style="left:111.6px;top:59.6px" width="13" height="13" viewBox="0 0 13 13"><path d="M4.8,4.2 l1.6,1.6 l1.6,-1.6 M4.8,6.6 l1.6,1.6 l1.6,-1.6" stroke="#666" fill="none" stroke-width="0.7"/></svg>
<div class="a" style="left:6.5px;top:76.6px;width:121px;height:17.6px;background:#efefef"></div>
<svg class="a" style="left:12.6px;top:81.4px" width="9" height="8" viewBox="0 0 9 8"><path d="M0.2,0.6 h3.2 l0.8,1 h4.4 v6 h-8.4 z" fill="#333"/><rect x="2" y="3.4" width="3.4" height="0.9" fill="#ddd"/></svg>
<div class="a" style="left:6.5px;top:94.2px;width:121px;height:326px;background:#fff"></div>
<div class="a" style="left:12.4px;top:98.4px;width:3.6px;height:4px;border-left:0.8px solid #666;border-bottom:0.8px solid #666"></div>
<div class="rd" style="top:109.4px;border-color:#555"><div class="a" style="left:1.5px;top:1.5px;width:3.8px;height:3.8px;border-radius:50%;background:#222"></div></div>
<div class="a" style="left:35px;top:107.6px;width:29.4px;height:12.2px;background:#0a6cd6"></div>
<div class="rd" style="top:122.3px"></div>
<div class="rd" style="top:135.2px"></div>
<div class="rd" style="top:148.1px"></div>
<div class="rd" style="top:161.0px"></div>
<div class="rd" style="top:173.9px"></div>
<div class="rd" style="top:186.8px"></div>
<div class="rd" style="top:199.7px"></div>
<div class="rd" style="top:212.6px"></div>
<div class="rd" style="top:225.5px"></div>
<div class="rd" style="top:238.4px"></div>
<div class="rd" style="top:251.3px"></div>
<div class="rd" style="top:264.2px"></div>
<div class="rd" style="top:277.1px"></div>
<div class="rd" style="top:290.0px"></div>
<div class="rd" style="top:302.9px"></div>
<div class="rd" style="top:315.8px"></div>
<div class="rd" style="top:328.7px"></div>
<div class="rd" style="top:341.6px"></div>
<div class="rd" style="top:354.5px"></div>
<div class="rd" style="top:367.4px"></div>
<div class="sec" style="top:420.4px"><i></i></div>
<div class="sec" style="top:438.2px"><i></i></div>
<div class="sec" style="top:456.1px"><i></i></div>
<div class="sec" style="top:473.9px"><i></i></div>
<div class="sec" style="top:491.8px"><i></i></div>
<div class="a" style="left:6.5px;top:509.6px;width:121px;height:20.4px;background:#e9e9e7"></div>
<div class="a" style="left:68.6px;top:514.2px;width:26.4px;height:12.6px;background:#f4f4f4;border:0.7px solid #c8c8c8"></div>
<div class="a" style="left:97.4px;top:514.2px;width:26.6px;height:12.6px;background:#f4f4f4;border:0.7px solid #c8c8c8"></div>
<div class="a" style="left:1.3px;top:531px;width:1020px;height:5px;background:#d3d2cd"></div>
<div class="a info"><div class="a" style="left:0;top:0;width:220px;height:13.6px;background:#cfdff6"></div></div>
<svg class="ic" style="left:200.6px;top:43.4px" width="7" height="6" viewBox="0 0 7 6"><path d="M0.4,0.6 h6.2 l-3.1,5 z" fill="#1428d8"/></svg>
<div class="cell" style="left:353px;width:15px"></div>
<div class="cell" style="left:419.7px;width:15.0px"></div>
<div class="cell" style="left:486px;width:15px"></div>
<div class="cell" style="left:553px;width:41.6px"></div>
<div class="a" style="left:923.6px;top:39.6px;width:12.8px;height:12.8px;background:#f2f2f2;border:0.7px solid #d4d4d4"></div>
<svg class="ic" style="left:923.6px;top:39.6px" width="13" height="13" viewBox="0 0 13 13"><circle cx="6.4" cy="6.4" r="2.1" stroke="#333" fill="none" stroke-width="1.6"/><path d="M9.00,6.40 L10.60,6.40 M8.24,8.24 L9.37,9.37 M6.40,9.00 L6.40,10.60 M4.56,8.24 L3.43,9.37 M3.80,6.40 L2.20,6.40 M4.56,4.56 L3.43,3.43 M6.40,3.80 L6.40,2.20 M8.24,4.56 L9.37,3.43 " stroke="#333" stroke-width="1.3"/></svg>
<div class="a" style="left:938.2px;top:39.3px;width:21.6px;height:13.2px;background:#fdf1f1;border:1px solid #e87070;border-radius:1px"></div>
<div class="a" style="left:961.2px;top:39.3px;width:21.8px;height:13.2px;background:#f1f3fd;border:1px solid #7088f0;border-radius:1px"></div>
<div class="a" style="left:984.6px;top:39.6px;width:6.6px;height:12.8px;background:#e4e4e4"></div>
<svg class="a" style="left:984.6px;top:39.6px" width="7" height="13" viewBox="0 0 7 13" fill="none" stroke="#888" stroke-width="0.7"><rect x="2" y="1.8" width="2.8" height="2.8"/><path d="M1.8,8 l3.2,3.2 M5,8 l-3.2,3.2"/></svg>
<div class="a" style="left:137px;top:58.300000000000004px;width:2px;height:5.6px;background:#111"></div>
<div class="a" style="left:179.5px;top:58.300000000000004px;width:2px;height:5.6px;background:#111"></div>
<div class="a" style="left:219px;top:58.300000000000004px;width:2px;height:5.6px;background:#f01818"></div>
<div class="a" style="left:366px;top:58.300000000000004px;width:2px;height:5.6px;background:#70b030"></div>
<div class="a" style="left:418px;top:58.300000000000004px;width:2px;height:5.6px;background:#3a9ce0"></div>
<div class="a" style="left:435px;top:58.300000000000004px;width:2px;height:5.6px;background:#2828c8"></div>
<div class="a" style="left:453px;top:58.300000000000004px;width:2px;height:5.6px;background:#8a3a78"></div>
<div class="a" style="left:137px;top:431.1px;width:2px;height:5.6px;background:#111"></div>
<div class="a" style="left:171.6px;top:431.1px;width:2px;height:5.6px;background:#70b030"></div>
<div class="a" style="left:223.6px;top:431.1px;width:2px;height:5.6px;background:#3a9ce0"></div>
<div class="a" style="left:241px;top:431.1px;width:2px;height:5.6px;background:#2828c8"></div>
<div class="a" style="left:258px;top:431.1px;width:2px;height:5.6px;background:#8a3a78"></div>
<div class="a" style="left:137px;top:448.5px;width:2px;height:5.6px;background:#f58a3c"></div>
<div class="a" style="left:210.2px;top:448.5px;width:2px;height:5.6px;background:#4d86f0"></div>
<div class="a" style="left:245.2px;top:448.5px;width:2px;height:5.6px;background:#f79ac6"></div>
<div class="a" style="left:997.6px;top:39px;width:18.6px;height:349px;background:#f1f1f1"></div>
<div class="a" style="left:997.6px;top:70.2px;width:18.6px;height:0.8px;background:#d0d0d0"></div>
<svg class="a" style="left:0;top:0" width="1024" height="536" viewBox="0 0 1024 536"><g transform="translate(1007,46.8)"><path d="M-3.4,-0.6 a3.6,3 0 0 1 6,-2 M3.4,0.6 a3.6,3 0 0 1 -6,2 M2.6,-4.6 v2.2 h-2.2 M-2.6,4.6 v-2.2 h2.2" stroke="#333" fill="none" stroke-width="0.9"/></g><g transform="translate(1007,62.2)"><circle cx="0" cy="0" r="1.8" stroke="#333" fill="none" stroke-width="1.6"/><path d="M2.30,0.00 L3.90,0.00 M1.63,1.63 L2.76,2.76 M0.00,2.30 L0.00,3.90 M-1.63,1.63 L-2.76,2.76 M-2.30,0.00 L-3.90,0.00 M-1.63,-1.63 L-2.76,-2.76 M-0.00,-2.30 L-0.00,-3.90 M1.63,-1.63 L2.76,-2.76 " stroke="#333" stroke-width="1.3"/></g><g transform="translate(1007,79.5)"><circle cx="0" cy="0" r="3.2" stroke="#333" fill="none" stroke-width="0.9"/></g><g transform="translate(1007,94.7)"><path d="M-3.4,-3.6 v7 h7.2 M-3,1 l2.2,-2.4 l1.8,1.6 l2.6,-3.6 M-2,1.6 h4.6 M-2,3 h1 m1,0 h1 m1,0 h1" stroke="#333" fill="none" stroke-width="0.9"/></g><g transform="translate(1007,110.6)"><path d="M-4,-3.6 h3.4 M-2.4,-5 v3 M-1.6,-2 l4,3 l1.2,2.2 l-2.4,-0.6 l-4,-3" stroke="#333" fill="none" stroke-width="0.9"/></g><g transform="translate(1007,126.5)"><path d="M-3.6,-4 h4 M-0.6,-2.6 l4,3 l1,2 l-2.2,-0.4 l-4,-3 z" stroke="#333" fill="none" stroke-width="0.9"/></g><g transform="translate(1007,142.2)"><path d="M-3.4,-4.6 v3.4 M-1.2,-1.2 l4,3 l1,2 l-2.2,-0.4 l-4,-3 z" stroke="#333" fill="none" stroke-width="0.9"/></g><g transform="translate(1007,157.9)"><path d="M-3.8,4 l7.6,-8" stroke="#333" fill="none" stroke-width="0.9"/></g><g transform="translate(1007,173.5)"><path d="M-3.4,1 l5.6,-5.8" stroke="#333" fill="none" stroke-width="0.9"/><text x="0" y="5" font-size="3.6" font-weight="bold" fill="#333" text-anchor="middle">AUTO</text></g><g transform="translate(1007,190)"><text x="-1" y="3.4" font-size="9" style="font-family:Liberation Serif,serif" fill="#333" text-anchor="middle">T</text><path d="M3,-4 v3 M1.5,-2.5 h3" stroke="#333" fill="none" stroke-width="0.9"/></g><g transform="translate(1007,205.6)"><text x="-1.6" y="-1" font-size="3.8" font-weight="bold" fill="#333" text-anchor="middle">AB</text><path d="M-2.6,3.6 l2,-2.6 h4.4 l-2,2.6 z" stroke="#333" fill="none" stroke-width="0.9"/></g><g transform="translate(1007,220.5)"><path d="M-2.2,-4 v8 M2.2,-4 v8" stroke="#333" fill="none" stroke-width="0.9"/><rect x="-3.5" y="-2" width="2.6" height="4" fill="#333"/><rect x="0.9" y="-2.6" width="2.6" height="4.6" fill="#333"/></g><g transform="translate(1007,237.5)"><rect x="-7.4" y="-6.6" width="14.6" height="13" fill="#f6f6f6" stroke="#bbb" stroke-width="0.8"/><circle cx="-1.4" cy="0.4" r="2.2" stroke="#333" fill="none" stroke-width="0.9"/><path d="M0.4,2.2 l2,2 M3.8,-3.6 v3" stroke="#333" fill="none" stroke-width="0.9"/></g><g transform="translate(1007,253)"><circle cx="-1.4" cy="0.6" r="2.2" stroke="#333" fill="none" stroke-width="0.9"/><path d="M0.4,2.4 l-3.6,3 M2.4,-3.6 h2.4 M2.4,-2.2 h2.4 M2.4,-0.8 h2.4" stroke="#333" fill="none" stroke-width="0.9"/></g><g transform="translate(1007,268.3)"><path d="M-3.6,3.8 l2.4,-3 l2,1.4 l3,-4.6 M-3.8,4.6 h7.6" stroke="#333" fill="none" stroke-width="0.9"/><circle cx="0" cy="1.6" r="1.6" stroke="#333" fill="none" stroke-width="0.9"/></g><g transform="translate(1007,285)"><path d="M-3.6,-1 l2.4,-2.6 l2.4,2.6 M-1.2,-3.4 v8 M0.6,0 h3.6 M0.6,2 h3.6 M2.4,-3.6 l2,1.4" stroke="#333" fill="none" stroke-width="0.9"/></g><g transform="translate(1007,301)"><path d="M-3.6,-3 h7.2 l-7.2,6 h7.2" stroke="#333" fill="none" stroke-width="0.9"/></g><g transform="translate(1007,316.2)"><path d="M-3.6,-3.6 v7.2 M-1.2,-3.6 v7.2 M1.2,-3.6 v7.2 M3.6,-3.6 v7.2" stroke="#333" fill="none" stroke-width="0.9"/></g><g transform="translate(1007,332.8)"><path d="M-3.6,-3.6 v7.2 M-1.6,-3.6 v7.2 M0.8,-3.6 v7.2 M3.6,-3.6 v7.2" stroke="#333" fill="none" stroke-width="0.9"/></g><g transform="translate(1007,348)"><path d="M-2.6,-0.4 a3,2.8 0 1 1 1.4,2.8 M-4,-2.4 l1.4,2.2 l2,-1.4" stroke="#333" fill="none" stroke-width="0.9"/></g><g transform="translate(1007,364)"><path d="M2.6,-0.4 a3,2.8 0 1 0 -1.4,2.8 M4,-2.4 l-1.4,2.2 l-2,-1.4" stroke="#333" fill="none" stroke-width="0.9"/></g><g transform="translate(1007,379.6)"><circle cx="-0.8" cy="-0.8" r="2.6" stroke="#333" fill="none" stroke-width="0.9"/><path d="M1.2,1.2 l2.6,2.6" stroke="#333" fill="none" stroke-width="0.9"/></g></svg>
<span class="t" style="left:6.60px;top:1.30px;font-size:8px;color:#fff;transform:scaleX(0.8982);transform-origin:0 0;font-weight:bold;">1</span>
<span class="t" style="left:17.40px;top:1.30px;font-size:7.6px;color:#e8e8e8;transform:scaleX(0.9051);transform-origin:0 0;font-weight:bold;">?</span>
<span class="t" style="left:27.60px;top:1.10px;font-size:9.4px;color:#d6d8d4;transform:scaleX(0.9543);transform-origin:0 0;">[9590] 종합차트</span>
<span class="t" style="left:39.46px;top:20.30px;font-size:8.8px;color:#111;letter-spacing:0.119px;">전</span>
<span class="t" style="left:55.56px;top:20.30px;font-size:8.8px;color:#111;letter-spacing:-0.073px;">주식</span>
<span class="t" style="left:80.77px;top:20.10px;font-size:9.4px;color:#fff;letter-spacing:-0.066px;">K</span>
<span class="t" style="left:94.20px;top:20.30px;font-size:9px;color:#111;transform:scaleX(0.8579);transform-origin:0 0;">011200</span>
<span class="t" style="left:155.75px;top:20.30px;font-size:8.6px;color:#555;letter-spacing:-0.094px;">관</span>
<span class="t" style="left:171.25px;top:20.30px;font-size:8.6px;color:#666;letter-spacing:-0.094px;">송</span>
<span class="t" style="left:208.66px;top:20.30px;font-size:8.8px;color:#fff;letter-spacing:0.119px;">거</span>
<span class="t" style="left:220.35px;top:20.30px;font-size:9.6px;color:#111;letter-spacing:-0.107px;font-weight:bold;">HMM</span>
<span class="t" style="left:269.40px;top:16.10px;font-size:4.6px;color:#e03060;transform:scaleX(0.9014);transform-origin:0 0;font-weight:bold;">N</span>
<span class="t" style="left:280.80px;top:20.30px;font-size:9.6px;color:#111;transform:scaleX(0.8234);transform-origin:0 0;font-weight:bold;">i</span>
<span class="t" style="left:293.26px;top:20.30px;font-size:8.8px;color:#111;letter-spacing:-0.081px;">일</span>
<span class="t" style="left:306.76px;top:20.30px;font-size:8.8px;color:#fff;letter-spacing:-0.081px;">주</span>
<span class="t" style="left:320.26px;top:20.30px;font-size:8.8px;color:#111;letter-spacing:-0.081px;">월</span>
<span class="t" style="left:333.76px;top:20.30px;font-size:8.8px;color:#111;letter-spacing:-0.081px;">분</span>
<span class="t" style="left:347.26px;top:20.30px;font-size:8.8px;color:#111;letter-spacing:-0.081px;">틱</span>
<span class="t" style="left:360.76px;top:20.30px;font-size:8.8px;color:#111;letter-spacing:-0.081px;">년</span>
<span class="t" style="left:378.40px;top:20.30px;font-size:8.6px;color:#222;transform:scaleX(0.8784);transform-origin:0 0;">1</span>
<span class="t" style="left:392.05px;top:20.30px;font-size:8.6px;color:#222;transform:scaleX(0.8784);transform-origin:0 0;">3</span>
<span class="t" style="left:405.70px;top:20.30px;font-size:8.6px;color:#222;transform:scaleX(0.8784);transform-origin:0 0;">5</span>
<span class="t" style="left:417.25px;top:20.30px;font-size:8.6px;color:#222;transform:scaleX(0.8784);transform-origin:0 0;">10</span>
<span class="t" style="left:430.90px;top:20.30px;font-size:8.6px;color:#222;transform:scaleX(0.8784);transform-origin:0 0;">30</span>
<span class="t" style="left:444.55px;top:20.30px;font-size:8.6px;color:#222;transform:scaleX(0.8784);transform-origin:0 0;">60</span>
<span class="t" style="left:474.00px;top:20.30px;font-size:8.6px;color:#555;transform:scaleX(0.7529);transform-origin:0 0;">1</span>
<span class="t" style="left:495.40px;top:20.30px;font-size:9px;color:#111;transform:scaleX(0.9368);transform-origin:0 0;">2026/03/16</span>
<span class="t" style="left:559.60px;top:20.30px;font-size:8.6px;color:#b8b098;transform:scaleX(0.9637);transform-origin:0 0;">당</span>
<span class="t" style="left:588.40px;top:20.30px;font-size:9px;color:#111;transform:scaleX(0.8249);transform-origin:0 0;">150</span>
<span class="t" style="left:618.41px;top:20.30px;font-size:10px;color:#666;letter-spacing:1.619px;">/</span>
<span class="t" style="left:634.40px;top:20.30px;font-size:9px;color:#111;transform:scaleX(0.8287);transform-origin:0 0;">3000</span>
<span class="t" style="left:17.01px;top:41.10px;font-size:8.8px;color:#444;letter-spacing:0.027px;">종목</span>
<span class="t" style="left:95.71px;top:41.10px;font-size:8.8px;color:#444;letter-spacing:0.227px;">전략</span>
<span class="t" style="left:56.26px;top:40.70px;font-size:8.8px;color:#111;letter-spacing:0.527px;font-weight:bold;">지표</span>
<span class="t" style="left:12.55px;top:59.90px;font-size:8.8px;color:#c8c8c8;letter-spacing:0.301px;">스마트 검색</span>
<span class="t" style="left:27.40px;top:79.10px;font-size:8.8px;color:#222;transform:scaleX(0.9669);transform-origin:0 0;">유형</span>
<span class="t" style="left:24.04px;top:94.30px;font-size:8.8px;color:#222;letter-spacing:0.080px;">차트유형</span>
<span class="t" style="left:37.00px;top:107.50px;font-size:8.8px;color:#fff;letter-spacing:0.196px;">봉차트</span>
<span class="t" style="left:36.77px;top:120.40px;font-size:8.8px;color:#222;letter-spacing:0.139px;">바차트(시고저종)</span>
<span class="t" style="left:36.81px;top:133.30px;font-size:8.8px;color:#222;letter-spacing:0.227px;">바차트(고저종)</span>
<span class="t" style="left:36.75px;top:146.20px;font-size:8.8px;color:#222;letter-spacing:0.108px;">종가선차트</span>
<span class="t" style="left:36.76px;top:159.10px;font-size:8.8px;color:#222;letter-spacing:0.121px;">Mountain 차트</span>
<span class="t" style="left:36.66px;top:172.00px;font-size:8.8px;color:#222;letter-spacing:-0.071px;">P&amp;F차트</span>
<span class="t" style="left:36.77px;top:184.90px;font-size:8.8px;color:#222;letter-spacing:0.148px;">삼선전환도</span>
<span class="t" style="left:36.70px;top:197.80px;font-size:8.8px;color:#222;transform:scaleX(0.9753);transform-origin:0 0;">Swing차트</span>
<span class="t" style="left:36.70px;top:210.70px;font-size:8.8px;color:#222;transform:scaleX(0.9720);transform-origin:0 0;">Kagi차트</span>
<span class="t" style="left:36.70px;top:223.60px;font-size:8.8px;color:#222;transform:scaleX(0.9602);transform-origin:0 0;">Renko차트</span>
<span class="t" style="left:36.76px;top:236.50px;font-size:8.8px;color:#222;letter-spacing:0.128px;">역시계곡선</span>
<span class="t" style="left:36.67px;top:249.40px;font-size:8.8px;color:#222;letter-spacing:-0.052px;">CandleVolume</span>
<span class="t" style="left:36.68px;top:262.30px;font-size:8.8px;color:#222;letter-spacing:-0.035px;">EquiVolume</span>
<span class="t" style="left:36.70px;top:275.20px;font-size:8.8px;color:#222;transform:scaleX(0.9344);transform-origin:0 0;">FLOW차트</span>
<span class="t" style="left:36.76px;top:288.10px;font-size:8.8px;color:#222;letter-spacing:0.128px;">분산형차트</span>
<span class="t" style="left:36.82px;top:301.00px;font-size:8.8px;color:#222;letter-spacing:0.234px;">계단 차트</span>
<span class="t" style="left:36.77px;top:313.90px;font-size:8.8px;color:#222;letter-spacing:0.134px;">점 차트</span>
<span class="t" style="left:36.70px;top:326.80px;font-size:8.8px;color:#222;transform:scaleX(0.9582);transform-origin:0 0;">PV차트</span>
<span class="t" style="left:36.70px;top:339.70px;font-size:8.8px;color:#222;transform:scaleX(0.9171);transform-origin:0 0;">POLE차트</span>
<span class="t" style="left:36.71px;top:352.60px;font-size:8.8px;color:#222;letter-spacing:0.015px;">Heikin-Ashi 차트</span>
<span class="t" style="left:36.85px;top:365.50px;font-size:8.8px;color:#222;letter-spacing:0.301px;">중간선 차트</span>
<span class="t" style="left:26.86px;top:423.30px;font-size:8.8px;color:#222;letter-spacing:0.127px;">지표</span>
<span class="t" style="left:26.89px;top:441.15px;font-size:8.8px;color:#222;letter-spacing:0.180px;">신호검색</span>
<span class="t" style="left:26.89px;top:459.00px;font-size:8.8px;color:#222;letter-spacing:0.180px;">강세약세</span>
<span class="t" style="left:26.88px;top:476.85px;font-size:8.8px;color:#222;letter-spacing:0.168px;">투자자동향</span>
<span class="t" style="left:26.89px;top:494.70px;font-size:8.8px;color:#222;letter-spacing:0.180px;">관심지표</span>
<span class="t" style="left:12.69px;top:514.50px;font-size:8.8px;color:#222;letter-spacing:0.180px;">관심지표</span>
<span class="t" style="left:73.76px;top:514.50px;font-size:8.6px;color:#b8b8b8;letter-spacing:0.314px;">등록</span>
<span class="t" style="left:102.56px;top:514.50px;font-size:8.6px;color:#b8b8b8;letter-spacing:0.314px;">삭제</span>
<span class="t" style="left:145.71px;top:40.10px;font-size:8.8px;color:#1428d8;letter-spacing:0.616px;font-weight:bold;">20,950</span>
<span class="t" style="left:208.82px;top:40.10px;font-size:8.8px;color:#1428d8;letter-spacing:0.438px;font-weight:bold;">100</span>
<span class="t" style="left:239.26px;top:40.10px;font-size:8.8px;color:#1428d8;letter-spacing:0.521px;font-weight:bold;">-0.48%</span>
<span class="t" style="left:293.66px;top:40.10px;font-size:8.6px;color:#222;letter-spacing:0.130px;">2,198,294</span>
<span class="t" style="left:356.55px;top:40.10px;font-size:8.6px;color:#222;letter-spacing:-0.094px;">시</span>
<span class="t" style="left:423.15px;top:40.10px;font-size:8.6px;color:#222;letter-spacing:-0.094px;">고</span>
<span class="t" style="left:489.55px;top:40.10px;font-size:8.6px;color:#222;letter-spacing:-0.094px;">저</span>
<span class="t" style="left:380.98px;top:40.10px;font-size:8.6px;color:#e02828;letter-spacing:-0.049px;">21,250</span>
<span class="t" style="left:447.98px;top:40.10px;font-size:8.6px;color:#e02828;letter-spacing:-0.049px;">21,800</span>
<span class="t" style="left:514.59px;top:40.10px;font-size:8.6px;color:#2838e0;letter-spacing:-0.016px;">20,900</span>
<span class="t" style="left:556.86px;top:40.10px;font-size:8.6px;color:#222;letter-spacing:0.518px;font-weight:bold;">체결강도</span>
<span class="t" style="left:602.65px;top:40.10px;font-size:8.6px;color:#2838e0;letter-spacing:0.105px;">89.11</span>
<span class="t" style="left:905.29px;top:39.70px;font-size:8.6px;color:#444;letter-spacing:0.980px;">[주]</span>
<span class="t" style="left:940.51px;top:39.90px;font-size:8.8px;color:#e03030;letter-spacing:0.627px;">매수</span>
<span class="t" style="left:963.51px;top:39.90px;font-size:8.8px;color:#3050e8;letter-spacing:0.627px;">매도</span>
<span class="t" style="left:141.60px;top:54.90px;font-size:8.7px;color:#111;letter-spacing:0.207px;">대기매물</span>
<span class="t" style="left:183.20px;top:54.90px;font-size:8.7px;color:#111;transform:scaleX(0.9539);transform-origin:0 0;font-weight:bold;">HMM(K)</span>
<span class="t" style="left:223.21px;top:54.90px;font-size:8.7px;color:#f01818;letter-spacing:0.013px;">GoldenCrossEMA신호(매수)(5,20,c)</span>
<span class="t" style="left:370.76px;top:54.90px;font-size:8.7px;color:#70b030;letter-spacing:0.513px;">가격이평 5</span>
<span class="t" style="left:421.60px;top:54.90px;font-size:8.7px;color:#3a9ce0;transform:scaleX(0.9099);transform-origin:0 0;">20</span>
<span class="t" style="left:439.00px;top:54.90px;font-size:8.7px;color:#2828c8;transform:scaleX(0.9099);transform-origin:0 0;">60</span>
<span class="t" style="left:457.40px;top:54.90px;font-size:8.7px;color:#8a3a78;transform:scaleX(0.8690);transform-origin:0 0;">120</span>
<span class="t" style="left:142.08px;top:427.70px;font-size:8.7px;color:#111;letter-spacing:0.167px;">거래량</span>
<span class="t" style="left:176.62px;top:427.70px;font-size:8.7px;color:#70b030;letter-spacing:0.446px;">거래이평 5</span>
<span class="t" style="left:228.00px;top:427.70px;font-size:8.7px;color:#3a9ce0;transform:scaleX(0.8892);transform-origin:0 0;">20</span>
<span class="t" style="left:245.60px;top:427.70px;font-size:8.7px;color:#2828c8;transform:scaleX(0.8892);transform-origin:0 0;">60</span>
<span class="t" style="left:263.00px;top:427.70px;font-size:8.7px;color:#8a3a78;transform:scaleX(0.8690);transform-origin:0 0;">120</span>
<span class="t" style="left:142.00px;top:445.10px;font-size:8.7px;color:#f58a3c;transform:scaleX(0.9537);transform-origin:0 0;">MACD(12,26,9,c)</span>
<span class="t" style="left:215.10px;top:445.10px;font-size:8.7px;color:#4d86f0;letter-spacing:0.207px;">Signal</span>
<span class="t" style="left:249.80px;top:445.10px;font-size:8.7px;color:#f79ac6;transform:scaleX(0.7827);transform-origin:0 0;">MACD Osc</span></div></body></html>
